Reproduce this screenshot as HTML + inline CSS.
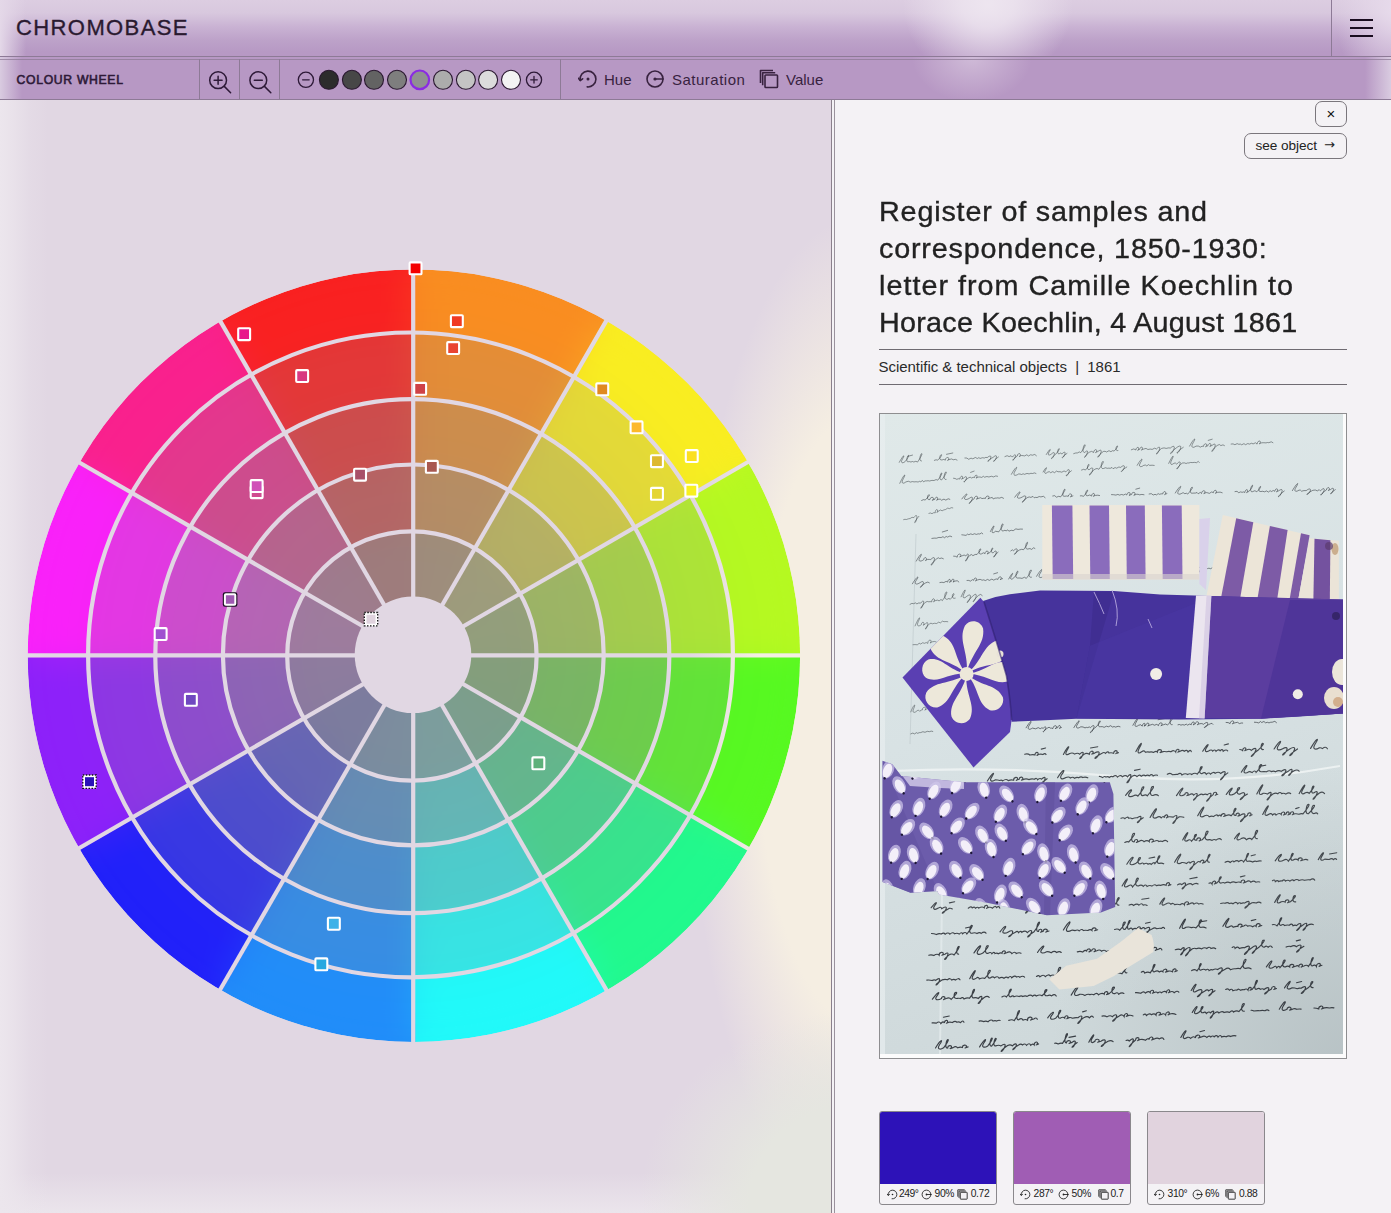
<!DOCTYPE html>
<html lang="en"><head><meta charset="utf-8"><title>Chromobase - Colour Wheel</title>
<style>
*{box-sizing:border-box;margin:0;padding:0}
html,body{width:1391px;height:1213px;overflow:hidden}
body{position:relative;font-family:"Liberation Sans",sans-serif;color:#222;background:#e1d7e3}
.bg{position:absolute;left:0;top:0;width:832px;height:1213px;background:
 radial-gradient(ellipse 220px 190px at 860px 1200px,#e5e6e0 0,#e5e6e0 50%,rgba(229,230,224,0) 100%),
 radial-gradient(ellipse 172px 505px at 860px 720px,#f5eee2 0,#f5eee2 60%,rgba(245,238,226,0) 100%),
 linear-gradient(90deg,#ece6ed 0,rgba(236,230,237,.75) 12px,rgba(236,230,237,.25) 30px,rgba(236,230,237,0) 48px),
 linear-gradient(0deg,#ebe5ec 0,rgba(235,229,236,0) 40px),
 #e1d7e3}
.wheel{position:absolute;left:0;top:100px}
.hdr{position:absolute;left:0;top:0;width:1391px;height:100px;overflow:hidden;color:#2e1a38}
.row1{position:absolute;left:0;top:0;width:1391px;height:57px;background:
 radial-gradient(ellipse 85px 80px at 988px 4px,rgba(238,230,240,.97) 0,rgba(238,230,240,.8) 30%,rgba(238,230,240,0) 100%),
 radial-gradient(ellipse 60px 90px at 1395px 10px,rgba(232,220,236,.95) 0,rgba(232,220,236,0) 100%),
 linear-gradient(90deg,#e4d8e8 0,rgba(228,216,232,0) 26px),
 linear-gradient(180deg,#dccde1 0,#d8c8de 13px,#c9b2d3 27px,#bda2c9 40px,#b799c4 52px,#b798c4 57px)}
.row2{position:absolute;left:0;top:57px;width:1391px;height:43px;background:
 radial-gradient(ellipse 60px 45px at 972px 0px,rgba(228,216,232,.55) 0,rgba(228,216,232,0) 100%),
 linear-gradient(90deg,#d9cbe0 0,rgba(217,203,224,0) 22px),
 linear-gradient(270deg,#d9cbe0 0,rgba(217,203,224,0) 26px),
 #b798c4}
.ln{position:absolute;background:#8d7a96}
.logo{position:absolute;left:16px;top:13px;font-size:22px;letter-spacing:1.4px;line-height:30px;color:#2a1a30;white-space:nowrap;-webkit-text-stroke:.35px #2a1a30}
.cw{position:absolute;left:16.6px;top:70px;font-size:12.2px;font-weight:400;letter-spacing:.68px;line-height:20px;color:#2e1a38;white-space:nowrap;-webkit-text-stroke:.6px #2e1a38}
.hsvg{position:absolute;left:0;top:0}
.hsv{position:absolute;top:69px;height:20px;font-size:15px;line-height:20px;color:#38223f;white-space:nowrap}
.hsv .ic{position:absolute;left:0;top:0}
.hsv span{position:absolute;top:0.5px}
.panel{position:absolute;left:0;top:0;width:0;height:0}
.panel:before{content:"";position:absolute;left:831px;top:100px;width:560px;height:1113px;background:#f4f2f5;border-left:1px solid #8a808c}
.panel:after{content:"";position:absolute;left:834px;top:100px;width:1px;height:1113px;background:#9a929c}
.btn{position:absolute;border:1px solid #7a767c;border-radius:7px;background:#f4f2f5;font-size:13px;color:#222}
.btn .x{position:absolute;left:0;top:2px;width:30px;text-align:center;font-size:15px;line-height:20px;color:#111}
.btn .so{position:absolute;left:10.5px;top:3px;line-height:18px;font-size:13.6px;letter-spacing:-.05px;white-space:nowrap}
.btn .ar{position:absolute;left:79px;top:2px;line-height:18px;font-size:13px;font-family:"DejaVu Sans",sans-serif}
.ttl{position:absolute;left:879px;top:194.4px;width:500px;font-size:27.5px;font-weight:400;line-height:36.7px;color:#222;white-space:nowrap;-webkit-text-stroke:.35px #222;transform:scaleX(1.045);transform-origin:0 0}
.ttl span{display:block}
.hr{position:absolute;left:879px;width:468px;height:1px;background:#6f6b72}
.meta{position:absolute;left:878.5px;top:356.5px;font-size:15px;line-height:20px;color:#2a2a2a;white-space:nowrap;letter-spacing:-.03px}
.frame{position:absolute;left:879px;top:413px;width:468px;height:646px;border:1px solid #8e8e90;background:#fbfbfb;overflow:hidden}
.frame svg{position:absolute;left:0;top:0}
.sw{position:absolute;top:1111px;width:118px;height:94px;border:1px solid #8a888c;border-radius:3px;background:#f4f2f5;overflow:hidden}
.swc{position:absolute;left:0;top:0;width:116px;height:72px}
.swl{position:absolute;left:0;top:72px;width:116px;height:20px;font-size:10.3px;color:#222}
.swl i{position:absolute;top:4.5px;width:11px;height:11px;font-style:normal}
.swl i svg{position:absolute;left:0;top:0}
.swl b{position:absolute;top:4px;font-weight:400;line-height:12px;letter-spacing:-.4px}
</style></head><body>
<div class="bg"></div>
<svg class="wheel" width="832" height="1113" viewBox="0 100 832 1113">
<defs>
<clipPath id="c0"><circle cx="413.9" cy="655.7" r="386.2"/></clipPath>
<clipPath id="c1"><circle cx="410.5" cy="654.9" r="322.4"/></clipPath>
<clipPath id="c2"><circle cx="412.3" cy="656.2" r="257.0"/></clipPath>
<clipPath id="c3"><circle cx="413.3" cy="654.9" r="190.4"/></clipPath>
<clipPath id="c4"><circle cx="411.9" cy="656.0" r="124.7"/></clipPath>
<mask id="wm" maskUnits="userSpaceOnUse" x="0" y="100" width="832" height="1113">
<circle cx="413.9" cy="655.7" r="386.2" fill="#fff"/>
<circle cx="413.0" cy="654.8" r="58.3" fill="#000"/>
<g fill="none" stroke="#000" stroke-width="4.2">
<circle cx="410.5" cy="654.9" r="322.40"/>
<circle cx="412.3" cy="656.2" r="257.00"/>
<circle cx="413.3" cy="654.9" r="190.40"/>
<circle cx="411.9" cy="656.0" r="124.70"/>
<line x1="413.2" y1="655.3" x2="413.2" y2="255.3"/>
<line x1="413.2" y1="655.3" x2="613.2" y2="308.9"/>
<line x1="413.2" y1="655.3" x2="759.6" y2="455.3"/>
<line x1="413.2" y1="655.3" x2="813.2" y2="655.3"/>
<line x1="413.2" y1="655.3" x2="759.6" y2="855.3"/>
<line x1="413.2" y1="655.3" x2="613.2" y2="1001.7"/>
<line x1="413.2" y1="655.3" x2="413.2" y2="1055.3"/>
<line x1="413.2" y1="655.3" x2="213.2" y2="1001.7"/>
<line x1="413.2" y1="655.3" x2="66.8" y2="855.3"/>
<line x1="413.2" y1="655.3" x2="13.2" y2="655.3"/>
<line x1="413.2" y1="655.3" x2="66.8" y2="455.3"/>
<line x1="413.2" y1="655.3" x2="213.2" y2="308.9"/>
</g></mask>
<filter id="bl" filterUnits="userSpaceOnUse" x="0" y="200" width="832" height="920"><feGaussianBlur stdDeviation="16"/></filter></defs>
<g mask="url(#wm)">
<g>
<g clip-path="url(#c0)">
<path fill="#f98d21" d="M413.2 655.3L411.1 261.1A394.2 394.2 0 0 1 612.1 314.9Z"/>
<path fill="#f9ed21" d="M413.2 655.3L608.5 312.9A394.2 394.2 0 0 1 755.6 460.0Z"/>
<path fill="#b5f921" d="M413.2 655.3L753.6 456.4A394.2 394.2 0 0 1 807.4 657.4Z"/>
<path fill="#57f921" d="M413.2 655.3L807.4 653.2A394.2 394.2 0 0 1 753.6 854.2Z"/>
<path fill="#21f98d" d="M413.2 655.3L755.6 850.6A394.2 394.2 0 0 1 608.5 997.7Z"/>
<path fill="#21f9f9" d="M413.2 655.3L612.1 995.7A394.2 394.2 0 0 1 411.1 1049.5Z"/>
<path fill="#218df9" d="M413.2 655.3L415.3 1049.5A394.2 394.2 0 0 1 214.3 995.7Z"/>
<path fill="#2121f9" d="M413.2 655.3L217.9 997.7A394.2 394.2 0 0 1 70.8 850.6Z"/>
<path fill="#8d21f9" d="M413.2 655.3L72.8 854.2A394.2 394.2 0 0 1 19.0 653.2Z"/>
<path fill="#f921f9" d="M413.2 655.3L19.0 657.4A394.2 394.2 0 0 1 72.8 456.4Z"/>
<path fill="#f9218d" d="M413.2 655.3L70.8 460.0A394.2 394.2 0 0 1 217.9 312.9Z"/>
<path fill="#f92121" d="M413.2 655.3L214.3 314.9A394.2 394.2 0 0 1 415.3 261.1Z"/>
</g>
<g clip-path="url(#c1)">
<path fill="#e38d38" d="M413.2 655.3L411.5 324.9A330.4 330.4 0 0 1 579.9 370.0Z"/>
<path fill="#e3d938" d="M413.2 655.3L576.9 368.3A330.4 330.4 0 0 1 700.2 491.6Z"/>
<path fill="#ace338" d="M413.2 655.3L698.5 488.6A330.4 330.4 0 0 1 743.6 657.0Z"/>
<path fill="#62e338" d="M413.2 655.3L743.6 653.6A330.4 330.4 0 0 1 698.5 822.0Z"/>
<path fill="#38e38d" d="M413.2 655.3L700.2 819.0A330.4 330.4 0 0 1 576.9 942.3Z"/>
<path fill="#38e3e3" d="M413.2 655.3L579.9 940.6A330.4 330.4 0 0 1 411.5 985.7Z"/>
<path fill="#388de3" d="M413.2 655.3L414.9 985.7A330.4 330.4 0 0 1 246.5 940.6Z"/>
<path fill="#3838e3" d="M413.2 655.3L249.5 942.3A330.4 330.4 0 0 1 126.2 819.0Z"/>
<path fill="#8d38e3" d="M413.2 655.3L127.9 822.0A330.4 330.4 0 0 1 82.8 653.6Z"/>
<path fill="#e338e3" d="M413.2 655.3L82.8 657.0A330.4 330.4 0 0 1 127.9 488.6Z"/>
<path fill="#e3388d" d="M413.2 655.3L126.2 491.6A330.4 330.4 0 0 1 249.5 368.3Z"/>
<path fill="#e33838" d="M413.2 655.3L246.5 370.0A330.4 330.4 0 0 1 414.9 324.9Z"/>
</g>
<g clip-path="url(#c2)">
<path fill="#cc8d4e" d="M413.2 655.3L411.8 390.3A265.0 265.0 0 0 1 546.9 426.5Z"/>
<path fill="#ccc44e" d="M413.2 655.3L544.5 425.1A265.0 265.0 0 0 1 643.4 524.0Z"/>
<path fill="#a4cc4e" d="M413.2 655.3L642.0 521.6A265.0 265.0 0 0 1 678.2 656.7Z"/>
<path fill="#6ecc4e" d="M413.2 655.3L678.2 653.9A265.0 265.0 0 0 1 642.0 789.0Z"/>
<path fill="#4ecc8d" d="M413.2 655.3L643.4 786.6A265.0 265.0 0 0 1 544.5 885.5Z"/>
<path fill="#4ecccc" d="M413.2 655.3L546.9 884.1A265.0 265.0 0 0 1 411.8 920.3Z"/>
<path fill="#4e8dcc" d="M413.2 655.3L414.6 920.3A265.0 265.0 0 0 1 279.5 884.1Z"/>
<path fill="#4e4ecc" d="M413.2 655.3L281.9 885.5A265.0 265.0 0 0 1 183.0 786.6Z"/>
<path fill="#8d4ecc" d="M413.2 655.3L184.4 789.0A265.0 265.0 0 0 1 148.2 653.9Z"/>
<path fill="#cc4ecc" d="M413.2 655.3L148.2 656.7A265.0 265.0 0 0 1 184.4 521.6Z"/>
<path fill="#cc4e8d" d="M413.2 655.3L183.0 524.0A265.0 265.0 0 0 1 281.9 425.1Z"/>
<path fill="#cc4e4e" d="M413.2 655.3L279.5 426.5A265.0 265.0 0 0 1 414.6 390.3Z"/>
</g>
<g clip-path="url(#c3)">
<path fill="#b58d65" d="M413.2 655.3L412.2 456.9A198.4 198.4 0 0 1 513.3 484.0Z"/>
<path fill="#b5b065" d="M413.2 655.3L511.5 483.0A198.4 198.4 0 0 1 585.5 557.0Z"/>
<path fill="#9cb565" d="M413.2 655.3L584.5 555.2A198.4 198.4 0 0 1 611.6 656.3Z"/>
<path fill="#79b565" d="M413.2 655.3L611.6 654.3A198.4 198.4 0 0 1 584.5 755.4Z"/>
<path fill="#65b58d" d="M413.2 655.3L585.5 753.6A198.4 198.4 0 0 1 511.5 827.6Z"/>
<path fill="#65b5b5" d="M413.2 655.3L513.3 826.6A198.4 198.4 0 0 1 412.2 853.7Z"/>
<path fill="#658db5" d="M413.2 655.3L414.2 853.7A198.4 198.4 0 0 1 313.1 826.6Z"/>
<path fill="#6565b5" d="M413.2 655.3L314.9 827.6A198.4 198.4 0 0 1 240.9 753.6Z"/>
<path fill="#8d65b5" d="M413.2 655.3L241.9 755.4A198.4 198.4 0 0 1 214.8 654.3Z"/>
<path fill="#b565b5" d="M413.2 655.3L214.8 656.3A198.4 198.4 0 0 1 241.9 555.2Z"/>
<path fill="#b5658d" d="M413.2 655.3L240.9 557.0A198.4 198.4 0 0 1 314.9 483.0Z"/>
<path fill="#b56565" d="M413.2 655.3L313.1 484.0A198.4 198.4 0 0 1 414.2 456.9Z"/>
</g>
<g clip-path="url(#c4)">
<path fill="#9e8d7c" d="M413.2 655.3L412.5 522.6A132.7 132.7 0 0 1 480.2 540.7Z"/>
<path fill="#9e9c7c" d="M413.2 655.3L478.9 540.0A132.7 132.7 0 0 1 528.5 589.6Z"/>
<path fill="#939e7c" d="M413.2 655.3L527.8 588.3A132.7 132.7 0 0 1 545.9 656.0Z"/>
<path fill="#849e7c" d="M413.2 655.3L545.9 654.6A132.7 132.7 0 0 1 527.8 722.3Z"/>
<path fill="#7c9e8d" d="M413.2 655.3L528.5 721.0A132.7 132.7 0 0 1 478.9 770.6Z"/>
<path fill="#7c9e9e" d="M413.2 655.3L480.2 769.9A132.7 132.7 0 0 1 412.5 788.0Z"/>
<path fill="#7c8d9e" d="M413.2 655.3L413.9 788.0A132.7 132.7 0 0 1 346.2 769.9Z"/>
<path fill="#7c7c9e" d="M413.2 655.3L347.5 770.6A132.7 132.7 0 0 1 297.9 721.0Z"/>
<path fill="#8d7c9e" d="M413.2 655.3L298.6 722.3A132.7 132.7 0 0 1 280.5 654.6Z"/>
<path fill="#9e7c9e" d="M413.2 655.3L280.5 656.0A132.7 132.7 0 0 1 298.6 588.3Z"/>
<path fill="#9e7c8d" d="M413.2 655.3L297.9 589.6A132.7 132.7 0 0 1 347.5 540.0Z"/>
<path fill="#9e7c7c" d="M413.2 655.3L346.2 540.7A132.7 132.7 0 0 1 413.9 522.6Z"/>
</g>
</g>
<g filter="url(#bl)" opacity=".2">
<g clip-path="url(#c0)">
<path fill="#f98d21" d="M413.2 655.3L411.1 261.1A394.2 394.2 0 0 1 612.1 314.9Z"/>
<path fill="#f9ed21" d="M413.2 655.3L608.5 312.9A394.2 394.2 0 0 1 755.6 460.0Z"/>
<path fill="#b5f921" d="M413.2 655.3L753.6 456.4A394.2 394.2 0 0 1 807.4 657.4Z"/>
<path fill="#57f921" d="M413.2 655.3L807.4 653.2A394.2 394.2 0 0 1 753.6 854.2Z"/>
<path fill="#21f98d" d="M413.2 655.3L755.6 850.6A394.2 394.2 0 0 1 608.5 997.7Z"/>
<path fill="#21f9f9" d="M413.2 655.3L612.1 995.7A394.2 394.2 0 0 1 411.1 1049.5Z"/>
<path fill="#218df9" d="M413.2 655.3L415.3 1049.5A394.2 394.2 0 0 1 214.3 995.7Z"/>
<path fill="#2121f9" d="M413.2 655.3L217.9 997.7A394.2 394.2 0 0 1 70.8 850.6Z"/>
<path fill="#8d21f9" d="M413.2 655.3L72.8 854.2A394.2 394.2 0 0 1 19.0 653.2Z"/>
<path fill="#f921f9" d="M413.2 655.3L19.0 657.4A394.2 394.2 0 0 1 72.8 456.4Z"/>
<path fill="#f9218d" d="M413.2 655.3L70.8 460.0A394.2 394.2 0 0 1 217.9 312.9Z"/>
<path fill="#f92121" d="M413.2 655.3L214.3 314.9A394.2 394.2 0 0 1 415.3 261.1Z"/>
</g>
<g clip-path="url(#c1)">
<path fill="#e38d38" d="M413.2 655.3L411.5 324.9A330.4 330.4 0 0 1 579.9 370.0Z"/>
<path fill="#e3d938" d="M413.2 655.3L576.9 368.3A330.4 330.4 0 0 1 700.2 491.6Z"/>
<path fill="#ace338" d="M413.2 655.3L698.5 488.6A330.4 330.4 0 0 1 743.6 657.0Z"/>
<path fill="#62e338" d="M413.2 655.3L743.6 653.6A330.4 330.4 0 0 1 698.5 822.0Z"/>
<path fill="#38e38d" d="M413.2 655.3L700.2 819.0A330.4 330.4 0 0 1 576.9 942.3Z"/>
<path fill="#38e3e3" d="M413.2 655.3L579.9 940.6A330.4 330.4 0 0 1 411.5 985.7Z"/>
<path fill="#388de3" d="M413.2 655.3L414.9 985.7A330.4 330.4 0 0 1 246.5 940.6Z"/>
<path fill="#3838e3" d="M413.2 655.3L249.5 942.3A330.4 330.4 0 0 1 126.2 819.0Z"/>
<path fill="#8d38e3" d="M413.2 655.3L127.9 822.0A330.4 330.4 0 0 1 82.8 653.6Z"/>
<path fill="#e338e3" d="M413.2 655.3L82.8 657.0A330.4 330.4 0 0 1 127.9 488.6Z"/>
<path fill="#e3388d" d="M413.2 655.3L126.2 491.6A330.4 330.4 0 0 1 249.5 368.3Z"/>
<path fill="#e33838" d="M413.2 655.3L246.5 370.0A330.4 330.4 0 0 1 414.9 324.9Z"/>
</g>
<g clip-path="url(#c2)">
<path fill="#cc8d4e" d="M413.2 655.3L411.8 390.3A265.0 265.0 0 0 1 546.9 426.5Z"/>
<path fill="#ccc44e" d="M413.2 655.3L544.5 425.1A265.0 265.0 0 0 1 643.4 524.0Z"/>
<path fill="#a4cc4e" d="M413.2 655.3L642.0 521.6A265.0 265.0 0 0 1 678.2 656.7Z"/>
<path fill="#6ecc4e" d="M413.2 655.3L678.2 653.9A265.0 265.0 0 0 1 642.0 789.0Z"/>
<path fill="#4ecc8d" d="M413.2 655.3L643.4 786.6A265.0 265.0 0 0 1 544.5 885.5Z"/>
<path fill="#4ecccc" d="M413.2 655.3L546.9 884.1A265.0 265.0 0 0 1 411.8 920.3Z"/>
<path fill="#4e8dcc" d="M413.2 655.3L414.6 920.3A265.0 265.0 0 0 1 279.5 884.1Z"/>
<path fill="#4e4ecc" d="M413.2 655.3L281.9 885.5A265.0 265.0 0 0 1 183.0 786.6Z"/>
<path fill="#8d4ecc" d="M413.2 655.3L184.4 789.0A265.0 265.0 0 0 1 148.2 653.9Z"/>
<path fill="#cc4ecc" d="M413.2 655.3L148.2 656.7A265.0 265.0 0 0 1 184.4 521.6Z"/>
<path fill="#cc4e8d" d="M413.2 655.3L183.0 524.0A265.0 265.0 0 0 1 281.9 425.1Z"/>
<path fill="#cc4e4e" d="M413.2 655.3L279.5 426.5A265.0 265.0 0 0 1 414.6 390.3Z"/>
</g>
<g clip-path="url(#c3)">
<path fill="#b58d65" d="M413.2 655.3L412.2 456.9A198.4 198.4 0 0 1 513.3 484.0Z"/>
<path fill="#b5b065" d="M413.2 655.3L511.5 483.0A198.4 198.4 0 0 1 585.5 557.0Z"/>
<path fill="#9cb565" d="M413.2 655.3L584.5 555.2A198.4 198.4 0 0 1 611.6 656.3Z"/>
<path fill="#79b565" d="M413.2 655.3L611.6 654.3A198.4 198.4 0 0 1 584.5 755.4Z"/>
<path fill="#65b58d" d="M413.2 655.3L585.5 753.6A198.4 198.4 0 0 1 511.5 827.6Z"/>
<path fill="#65b5b5" d="M413.2 655.3L513.3 826.6A198.4 198.4 0 0 1 412.2 853.7Z"/>
<path fill="#658db5" d="M413.2 655.3L414.2 853.7A198.4 198.4 0 0 1 313.1 826.6Z"/>
<path fill="#6565b5" d="M413.2 655.3L314.9 827.6A198.4 198.4 0 0 1 240.9 753.6Z"/>
<path fill="#8d65b5" d="M413.2 655.3L241.9 755.4A198.4 198.4 0 0 1 214.8 654.3Z"/>
<path fill="#b565b5" d="M413.2 655.3L214.8 656.3A198.4 198.4 0 0 1 241.9 555.2Z"/>
<path fill="#b5658d" d="M413.2 655.3L240.9 557.0A198.4 198.4 0 0 1 314.9 483.0Z"/>
<path fill="#b56565" d="M413.2 655.3L313.1 484.0A198.4 198.4 0 0 1 414.2 456.9Z"/>
</g>
<g clip-path="url(#c4)">
<path fill="#9e8d7c" d="M413.2 655.3L412.5 522.6A132.7 132.7 0 0 1 480.2 540.7Z"/>
<path fill="#9e9c7c" d="M413.2 655.3L478.9 540.0A132.7 132.7 0 0 1 528.5 589.6Z"/>
<path fill="#939e7c" d="M413.2 655.3L527.8 588.3A132.7 132.7 0 0 1 545.9 656.0Z"/>
<path fill="#849e7c" d="M413.2 655.3L545.9 654.6A132.7 132.7 0 0 1 527.8 722.3Z"/>
<path fill="#7c9e8d" d="M413.2 655.3L528.5 721.0A132.7 132.7 0 0 1 478.9 770.6Z"/>
<path fill="#7c9e9e" d="M413.2 655.3L480.2 769.9A132.7 132.7 0 0 1 412.5 788.0Z"/>
<path fill="#7c8d9e" d="M413.2 655.3L413.9 788.0A132.7 132.7 0 0 1 346.2 769.9Z"/>
<path fill="#7c7c9e" d="M413.2 655.3L347.5 770.6A132.7 132.7 0 0 1 297.9 721.0Z"/>
<path fill="#8d7c9e" d="M413.2 655.3L298.6 722.3A132.7 132.7 0 0 1 280.5 654.6Z"/>
<path fill="#9e7c9e" d="M413.2 655.3L280.5 656.0A132.7 132.7 0 0 1 298.6 588.3Z"/>
<path fill="#9e7c8d" d="M413.2 655.3L297.9 589.6A132.7 132.7 0 0 1 347.5 540.0Z"/>
<path fill="#9e7c7c" d="M413.2 655.3L346.2 540.7A132.7 132.7 0 0 1 413.9 522.6Z"/>
</g>
</g>
</g>
<rect x="409.6" y="262.4" width="11.9" height="11.9" rx="0.9" fill="#f40000" stroke="#fff" stroke-width="2.1"/>
<rect x="450.9" y="315.2" width="11.9" height="11.9" rx="0.9" fill="#f03a22" stroke="#fff" stroke-width="2.1"/>
<rect x="447.2" y="342.1" width="11.9" height="11.9" rx="0.9" fill="#e94432" stroke="#fff" stroke-width="2.1"/>
<rect x="414.2" y="382.9" width="11.9" height="11.9" rx="0.9" fill="#cf4147" stroke="#fff" stroke-width="2.1"/>
<rect x="596.3" y="383.4" width="11.9" height="11.9" rx="0.9" fill="#e08a20" stroke="#fff" stroke-width="2.1"/>
<rect x="630.6" y="421.4" width="11.9" height="11.9" rx="0.9" fill="#fdb92a" stroke="#fff" stroke-width="2.1"/>
<rect x="651.0" y="455.2" width="11.9" height="11.9" rx="0.9" fill="#ddb930" stroke="#fff" stroke-width="2.1"/>
<rect x="685.8" y="450.1" width="11.9" height="11.9" rx="0.9" fill="#fbdf20" stroke="#fff" stroke-width="2.1"/>
<rect x="651.0" y="487.9" width="11.9" height="11.9" rx="0.9" fill="#e4d535" stroke="#fff" stroke-width="2.1"/>
<rect x="685.4" y="484.7" width="11.9" height="11.9" rx="0.9" fill="#f8f020" stroke="#fff" stroke-width="2.1"/>
<rect x="238.2" y="328.2" width="11.9" height="11.9" rx="0.9" fill="#e8188a" stroke="#fff" stroke-width="2.1"/>
<rect x="296.2" y="370.1" width="11.9" height="11.9" rx="0.9" fill="#d83880" stroke="#fff" stroke-width="2.1"/>
<rect x="354.1" y="468.7" width="11.9" height="11.9" rx="0.9" fill="#a85068" stroke="#fff" stroke-width="2.1"/>
<rect x="425.9" y="460.9" width="11.9" height="11.9" rx="0.9" fill="#a85850" stroke="#fff" stroke-width="2.1"/>
<rect x="250.7" y="486.2" width="11.9" height="11.9" rx="0.9" fill="#d04c90" stroke="#fff" stroke-width="2.1"/>
<rect x="250.7" y="480.1" width="11.9" height="11.9" rx="0.9" fill="#d050b8" stroke="#fff" stroke-width="2.1"/>
<rect x="154.7" y="628.1" width="11.9" height="11.9" rx="0.9" fill="#a050d0" stroke="#fff" stroke-width="2.1"/>
<rect x="184.9" y="693.9" width="11.9" height="11.9" rx="0.9" fill="#7048c0" stroke="#fff" stroke-width="2.1"/>
<rect x="532.4" y="757.4" width="11.9" height="11.9" rx="0.9" fill="#5db07a" stroke="#fff" stroke-width="2.1"/>
<rect x="327.9" y="917.8" width="11.9" height="11.9" rx="0.9" fill="#3db2e8" stroke="#fff" stroke-width="2.1"/>
<rect x="315.4" y="958.4" width="11.9" height="11.9" rx="0.9" fill="#28a8e0" stroke="#fff" stroke-width="2.1"/>
<rect x="222.8" y="592.2" width="14.6" height="14.6" rx="2.2" fill="#1a1020"/>
<rect x="224.9" y="594.3" width="10.4" height="10.4" rx="1" fill="#9f59b2" stroke="#fff" stroke-width="2"/>
<rect x="364.2" y="612.4" width="13.6" height="13.6" fill="#fff"/>
<rect x="364.3" y="612.5" width="13.4" height="13.4" fill="none" stroke="#111" stroke-width="1.3" stroke-dasharray="1.5 1.5"/>
<rect x="366.5" y="614.7" width="9" height="9" fill="#e0d3de"/>
<rect x="82.7" y="774.9" width="13.6" height="13.6" fill="#fff"/>
<rect x="82.8" y="775.0" width="13.4" height="13.4" fill="none" stroke="#111" stroke-width="1.3" stroke-dasharray="1.5 1.5"/>
<rect x="85.0" y="777.2" width="9" height="9" fill="#2b12b8"/>
</svg>

<div class="panel">
  <div class="btn" style="left:1315px;top:101px;width:32px;height:26px"><span class="x">&#215;</span></div>
  <div class="btn" style="left:1244px;top:133px;width:103px;height:26px"><span class="so">see object</span><span class="ar">&#8594;</span></div>
  <h1 class="ttl"><span style="letter-spacing:.79px">Register of samples and</span><span style="letter-spacing:.78px">correspondence, 1850-1930:</span><span style="letter-spacing:.975px">letter from Camille Koechlin to</span><span style="letter-spacing:.25px">Horace Koechlin, 4 August 1861</span></h1>
  <div class="hr" style="top:349px"></div>
  <div class="meta">Scientific &amp; technical objects&nbsp; |&nbsp; 1861</div>
  <div class="hr" style="top:384px"></div>
  <div class="frame"><svg width="466" height="644" viewBox="0 0 466 644">
<defs><linearGradient id="pg" x1="0" y1="0" x2="0.25" y2="1"><stop offset="0" stop-color="#e0e9e9"/><stop offset="0.5" stop-color="#d8e2e4"/><stop offset="1" stop-color="#cfd9db"/></linearGradient><radialGradient id="pd" gradientUnits="userSpaceOnUse" cx="470" cy="650" r="300"><stop offset="0" stop-color="#a9b4b7" stop-opacity=".62"/><stop offset="1" stop-color="#a9b4b7" stop-opacity="0"/></radialGradient><linearGradient id="mf" x1="0" y1="0" x2="1" y2="0"><stop offset="0" stop-color="#3f2c92"/><stop offset="1" stop-color="#432c8e"/></linearGradient><clipPath id="pc"><rect x="0" y="0" width="463" height="640"/></clipPath><clipPath id="flapc"><path d="M22.5 263.4L100.4 183.7L104 188Q118 232 126.5 262Q131 290 131.6 306L130 318L93.5 353.4Z"/></clipPath><clipPath id="patc"><polygon points="2.5,346.7 12.4,350.3 21.4,361.9 84.3,368.2 229.8,368.2 233.4,379.9 235.2,493.1 220.9,498.5 166.9,501.2 105.8,488.6 59.1,480.6 57.3,477 30.4,478.8 2.5,468"/></clipPath></defs>
<rect width="466" height="644" fill="#fcfcfc"/>
<g clip-path="url(#pc)">
<rect width="463" height="640" fill="url(#pg)"/>
<rect width="463" height="640" fill="url(#pd)"/>
<rect x="0" y="0" width="5" height="640" fill="#e8eef0" opacity=".7"/>
<path d="M10 357Q120 352 235 362T460 352" fill="none" stroke="#eef3f3" stroke-width="2.2" opacity=".9"/>
<path d="M62 480L60 640" fill="none" stroke="#e3ebec" stroke-width="2" opacity=".8"/>
<path d="M36 120L30 330" fill="none" stroke="#b9c3c8" stroke-width=".8" opacity=".7"/>
<path d="M19.3 48.3C23.5 40.3 25.4 40.2 22.5 44.9C20.0 49.3 22.7 49.6 25.2 47.5C27.8 44.2 29.3 41.4 28.4 41.4C27.4 41.5 25.5 48.5 28.3 47.7Q29.7 47.4 30.9 48.0Q32.6 47.0 33.8 48.0Q36.1 46.5 37.5 48.1C41.0 42.9 42.7 39.6 41.7 39.6C40.4 39.7 38.3 47.8 41.5 47.0M28.0 42.3L32.5 41.1M54.3 46.3Q56.3 45.2 57.7 46.2C60.9 43.0 62.5 40.6 61.3 40.7C59.9 40.7 58.4 46.7 62.1 45.9Q64.1 44.7 65.3 46.2C65.3 43.0 69.4 42.5 68.7 45.2C68.2 46.8 65.7 46.7 70.2 45.3Q72.0 44.3 73.1 45.8Q75.5 44.6 77.1 46.0M66.5 40.3L72.8 39.0M84.9 43.9Q87.1 43.5 88.7 45.3Q91.3 43.2 92.8 44.8Q95.7 42.3 97.3 44.5Q99.2 42.6 100.0 44.5Q102.5 43.2 104.4 44.0Q106.1 42.7 107.1 43.7C109.6 41.5 111.5 41.4 110.8 43.9C109.5 48.4 103.4 48.7 113.2 43.3C115.5 41.2 117.1 41.1 116.3 43.7C114.9 48.7 109.7 49.0 118.4 43.0M124.9 42.5Q127.5 40.8 129.1 42.6Q131.4 40.6 132.3 43.1C134.6 40.2 136.1 40.1 135.4 42.6C134.0 47.5 129.2 47.7 137.3 42.0C137.3 39.1 141.0 38.7 140.3 41.4C139.8 43.0 137.6 42.9 141.6 41.5Q143.2 41.6 144.6 41.9Q147.2 39.6 148.4 42.0Q150.9 39.9 152.4 41.2Q155.1 39.3 156.5 41.7M166.3 40.5C169.9 34.3 171.6 34.2 169.1 37.9C166.9 41.5 169.4 41.9 171.8 39.7C173.6 38.1 174.9 38.1 174.2 40.6C172.6 46.0 168.3 46.2 175.9 40.0C178.6 36.9 179.9 34.6 179.1 34.6C177.9 34.7 176.5 40.5 179.3 39.7Q181.1 37.9 181.8 40.1C184.1 37.6 185.7 37.5 185.0 40.0C183.5 45.1 178.4 45.4 187.0 39.4M193.7 39.6Q195.8 38.7 197.5 38.9Q199.6 37.1 200.7 38.7C204.2 34.1 206.0 30.7 204.9 30.7C203.5 30.8 201.4 39.2 204.9 38.4C206.8 36.4 208.1 36.3 207.3 38.8C205.6 44.9 201.3 45.1 209.1 38.3Q212.0 36.3 213.6 38.5C213.8 35.1 217.4 34.7 216.6 37.4C216.1 39.0 214.0 38.9 217.9 37.5C220.1 35.7 221.9 35.6 221.1 38.1C219.1 44.9 213.6 45.2 223.3 37.5Q225.2 36.8 226.5 38.0Q229.3 35.5 230.9 37.7Q232.9 35.9 234.1 37.1C236.9 34.1 238.3 31.9 237.3 31.9C236.1 32.0 234.7 37.4 237.9 36.6M251.3 35.7Q254.2 33.9 255.9 36.0C256.0 32.9 259.4 32.5 258.6 35.1C258.2 36.8 256.2 36.7 259.8 35.3C259.9 32.7 263.2 32.3 262.4 34.9C261.9 36.6 260.0 36.5 263.6 35.1Q266.3 33.5 267.9 35.5Q270.3 34.7 272.2 35.4Q274.9 33.2 276.5 35.0C278.8 32.6 280.3 32.5 279.6 35.0C277.6 41.8 272.6 42.1 281.6 34.4Q284.2 33.4 286.2 34.4Q288.5 33.6 290.4 34.0C293.0 31.8 294.9 31.7 294.2 34.3C292.1 41.4 285.9 41.8 296.7 33.6C299.3 31.5 301.4 31.4 300.7 33.9C298.7 40.8 292.0 41.2 303.3 33.3M309.6 32.1C314.3 23.3 316.5 23.2 313.1 28.8C310.1 33.9 313.3 34.2 316.0 32.1Q318.5 31.5 320.3 33.1Q322.2 31.7 323.5 32.4C323.5 29.3 327.4 28.9 326.6 31.5C326.1 33.2 323.9 33.1 328.0 31.7C328.0 29.1 331.6 28.7 330.8 31.3C330.3 32.9 328.2 32.9 332.1 31.4C334.2 29.6 335.8 29.5 335.1 32.1C333.0 39.3 327.9 39.5 337.1 31.5Q339.6 29.5 340.9 31.6Q343.1 30.0 344.5 31.5M328.2 26.4L332.2 25.2M351.1 30.0Q353.3 29.4 354.9 30.7Q357.4 28.8 358.8 30.3Q360.5 29.6 361.7 30.8Q364.3 28.5 365.5 30.7Q368.0 28.8 369.5 30.1Q371.7 28.5 373.1 29.9Q375.8 27.6 377.1 30.1C377.3 26.5 381.1 26.0 380.3 28.7C379.9 30.3 377.6 30.2 381.7 28.8Q383.9 28.6 386.0 28.9Q387.6 28.2 388.8 28.7Q391.5 26.8 393.0 28.6" fill="none" stroke="#2b3036" stroke-width="0.90" stroke-linecap="round" opacity="0.55"/>
<path d="M19.8 69.3C24.4 59.2 26.4 59.1 23.3 64.7C20.6 69.8 23.4 70.1 25.9 67.9Q28.6 66.5 30.4 68.1Q32.5 67.2 34.1 67.9Q36.2 67.5 38.1 68.0Q39.8 66.7 40.8 67.8Q42.8 65.2 43.5 67.8Q45.3 66.4 46.5 66.9Q48.2 66.5 49.6 67.0Q52.0 66.0 54.0 66.5Q56.3 64.8 57.8 66.2C61.0 62.0 62.7 58.9 61.6 59.0C60.3 59.1 58.5 66.6 61.8 65.8C65.3 61.2 67.1 57.8 66.0 57.9C64.5 58.0 62.5 66.4 66.1 65.5M73.5 64.2Q75.2 64.2 76.7 65.3Q78.5 64.4 79.9 65.0C80.1 61.7 83.3 61.3 82.5 63.9C82.1 65.6 80.2 65.5 83.7 64.1C85.6 62.2 87.1 62.1 86.4 64.7C85.2 69.1 80.5 69.5 88.3 64.0Q90.4 62.3 91.5 64.0Q93.3 62.9 94.6 63.5C94.7 60.7 97.7 60.3 97.0 62.9C96.6 64.6 94.8 64.5 98.1 63.1Q100.1 62.7 101.7 63.4Q103.7 61.3 104.6 63.2Q107.1 61.9 108.9 63.0Q111.6 61.6 113.5 62.9Q115.9 61.2 117.6 62.2M90.6 58.4L94.1 57.1M131.4 60.3C136.1 51.8 138.5 51.6 135.0 57.0C132.1 62.0 135.5 62.2 138.5 60.0Q140.1 59.8 141.5 60.5Q143.3 59.2 144.5 60.3Q147.2 58.8 149.1 59.9Q151.0 58.9 152.5 59.5Q154.5 58.3 156.0 59.4M163.1 58.0C166.1 52.6 167.7 52.5 165.4 56.3C163.4 59.8 165.6 60.1 167.8 58.0Q169.5 57.1 170.6 58.7Q173.1 56.6 174.5 58.7Q176.9 55.9 178.0 57.8Q180.1 57.4 181.8 58.2Q184.4 55.8 185.7 57.9C188.2 55.1 189.9 54.9 189.2 57.5C187.6 63.5 182.1 63.9 191.4 56.8M201.5 56.0Q203.9 54.5 205.5 56.0C208.4 52.7 209.8 50.4 208.8 50.4C207.5 50.5 206.2 56.3 209.4 55.5C211.7 53.4 213.4 53.3 212.7 55.9C210.8 62.8 205.2 63.2 214.9 55.2Q217.3 53.6 218.8 55.3C222.5 50.5 224.2 47.3 223.0 47.4C221.5 47.5 219.6 55.4 223.5 54.5Q225.7 53.1 227.2 54.3Q228.8 54.0 230.3 54.3Q232.3 52.5 233.1 54.7Q235.4 52.7 236.6 54.2Q239.1 52.2 240.7 53.4C243.1 51.2 245.0 51.1 244.3 53.6C242.9 58.8 236.9 59.2 246.8 53.0M257.2 51.3C261.5 43.7 263.7 43.5 260.5 48.6C257.8 53.2 261.0 53.5 263.8 51.3Q265.6 50.5 266.8 51.9Q268.8 49.6 269.7 51.4Q272.1 51.0 274.2 51.4M288.7 49.4C292.9 40.4 294.7 40.3 291.7 45.9C289.2 51.0 291.7 51.3 294.0 49.2Q295.6 48.4 296.6 50.2C299.0 47.3 300.8 47.2 300.1 49.7C298.2 56.7 292.7 57.1 302.2 49.1Q304.5 48.4 306.1 49.5Q307.7 48.6 308.9 49.0Q310.7 48.1 312.2 48.6Q314.5 48.1 316.5 48.7Q318.6 46.1 319.4 48.4" fill="none" stroke="#2b3036" stroke-width="0.90" stroke-linecap="round" opacity="0.55"/>
<path d="M41.6 86.4Q43.8 85.0 45.1 86.0C48.6 82.9 50.3 80.7 49.0 80.7C47.5 80.7 46.0 86.3 49.9 85.6C49.9 82.8 54.2 82.5 53.4 85.2C52.8 86.8 50.3 86.6 54.9 85.3C55.0 82.7 58.4 82.4 57.6 85.1C57.1 86.7 55.1 86.5 58.8 85.2Q60.5 84.6 61.5 86.2Q64.3 84.1 65.8 86.1Q68.4 83.8 69.9 85.2M81.9 84.9C86.3 78.9 88.7 78.8 85.5 82.4C82.8 85.9 86.3 86.3 89.4 84.3C91.5 82.7 93.0 82.7 92.2 85.2C90.4 90.9 85.3 91.1 94.3 84.6C94.3 81.7 98.4 81.4 97.5 84.1C97.0 85.7 94.6 85.5 99.0 84.2Q100.9 83.1 102.0 84.6Q104.0 84.0 105.5 84.4C105.5 81.5 109.8 81.2 109.0 83.8C108.4 85.4 105.9 85.3 110.5 83.9Q112.6 82.4 113.3 85.0Q115.1 83.6 116.4 84.1Q118.0 83.5 119.2 84.2Q122.0 82.4 123.6 84.2M134.8 83.2C139.4 76.7 141.8 76.6 138.5 80.8C135.6 84.6 139.1 85.0 142.3 83.0C144.6 81.4 146.4 81.4 145.6 83.9C143.7 89.7 137.9 89.9 147.9 83.3Q149.6 82.6 150.9 83.4Q153.4 81.3 154.3 83.8Q155.9 82.9 157.0 83.6Q159.4 81.8 160.9 82.9Q163.7 81.2 165.2 83.6M172.7 81.9Q175.1 80.7 176.4 83.2Q179.0 81.6 180.6 82.9C184.0 78.3 185.8 75.2 184.8 75.2C183.6 75.2 181.3 83.0 184.4 82.3Q186.6 81.7 188.3 82.3C188.4 79.4 192.3 79.1 191.5 81.7C191.0 83.4 188.6 83.2 192.9 81.9M200.3 81.8Q202.1 81.4 203.5 82.4C206.8 78.6 208.4 76.1 207.4 76.2C206.0 76.2 204.3 82.4 207.7 81.7Q210.2 80.0 211.5 82.1C211.8 78.8 215.2 78.6 214.4 81.2C213.8 82.8 211.8 82.6 215.6 81.4Q217.8 80.9 219.6 81.5M231.5 80.6Q233.8 80.6 235.9 81.1Q238.1 79.7 239.4 81.1Q241.8 79.9 243.5 81.0Q245.7 79.2 246.8 81.0C246.8 78.0 250.9 77.7 250.1 80.3C249.6 81.9 247.2 81.8 251.6 80.5C251.4 77.9 255.8 77.6 255.0 80.2C254.4 81.8 251.9 81.7 256.6 80.3Q258.1 80.0 259.4 80.8Q261.9 80.1 264.0 80.7M255.8 75.2L259.7 74.1M269.1 79.9Q271.7 78.8 273.2 81.0Q275.2 79.7 276.5 80.9Q278.5 78.7 279.3 80.3Q281.2 79.6 282.8 79.9C282.9 77.1 286.4 76.8 285.6 79.4C285.1 81.0 283.0 80.9 286.9 79.6M295.3 79.0C300.3 70.7 302.7 70.7 299.0 75.9C295.9 80.7 299.3 81.1 302.3 79.0Q303.8 78.4 304.8 79.7Q306.7 78.6 307.7 80.1C311.5 75.9 313.3 73.2 312.1 73.2C310.5 73.3 308.7 79.9 312.6 79.2Q314.0 79.0 315.3 79.1Q317.4 77.6 318.2 79.8Q320.7 77.1 321.5 79.5C321.7 76.1 325.7 75.8 324.9 78.5C324.4 80.1 322.0 79.9 326.3 78.6Q327.9 78.7 329.3 79.4Q332.0 76.9 333.4 78.7C333.5 75.8 337.2 75.5 336.4 78.2C335.9 79.8 333.7 79.6 337.7 78.3Q340.2 77.7 342.2 78.7M355.0 77.5Q357.4 76.5 358.7 78.7Q360.8 77.3 362.1 78.3Q363.8 77.5 364.8 78.5C365.2 75.1 368.4 74.8 367.5 77.4C367.0 79.0 365.2 78.9 368.7 77.6C371.8 74.1 373.4 71.3 372.4 71.3C371.2 71.3 369.2 78.4 372.4 77.7Q375.2 75.7 376.8 77.8C379.9 74.8 381.4 72.5 380.4 72.5C379.0 72.6 377.5 78.2 380.9 77.5Q382.9 76.9 384.4 77.8Q387.0 75.9 388.3 78.1Q390.5 75.6 391.3 77.5Q393.6 75.7 394.8 77.3C395.0 74.3 398.4 74.0 397.5 76.7C397.0 78.3 395.0 78.1 398.7 76.8C401.1 75.1 402.8 75.0 402.0 77.5C399.7 84.6 394.1 84.7 404.3 77.0M412.4 76.6C417.4 67.9 419.5 67.8 416.1 73.0C413.1 77.8 416.2 78.2 419.0 76.1Q420.6 75.6 421.5 77.2Q424.1 76.3 426.2 76.6C429.0 74.4 431.1 74.3 430.3 76.9C428.7 81.7 422.1 81.9 432.9 76.3Q435.5 75.4 437.3 76.9Q439.6 74.5 440.4 76.9C443.1 74.0 444.9 74.0 444.1 76.5C442.1 82.6 436.4 82.8 446.4 76.0C446.6 73.0 450.1 72.8 449.3 75.4C448.8 77.0 446.7 76.8 450.6 75.5C452.6 73.8 454.1 73.8 453.3 76.3C451.8 81.2 446.9 81.3 455.3 75.7" fill="none" stroke="#2b3036" stroke-width="0.90" stroke-linecap="round" opacity="0.60"/>
<path d="M23.6 105.6Q25.1 105.0 26.4 105.5Q28.3 104.7 30.1 104.5Q32.1 102.6 33.8 103.6C35.6 101.1 37.1 100.7 36.9 103.3C36.3 110.1 31.2 111.3 38.9 102.3M48.9 99.3Q50.5 98.4 52.0 99.7Q53.8 98.1 55.3 98.8C55.0 95.3 57.9 94.3 57.7 97.1C57.5 98.8 55.7 99.0 58.8 97.0Q60.6 95.1 62.1 96.8Q63.9 95.6 65.6 95.5Q67.7 93.2 69.5 94.6Q71.2 93.1 72.8 93.8" fill="none" stroke="#2b3036" stroke-width="0.90" stroke-linecap="round" opacity="0.50"/>
<path d="M51.9 124.4Q54.3 123.9 56.5 124.2Q59.0 122.9 61.1 123.6Q63.3 121.6 64.4 123.8Q66.4 121.5 67.5 123.1Q70.1 121.0 71.8 122.6M62.3 118.0L67.6 116.4M81.8 120.8Q83.9 121.0 86.0 121.4Q87.9 119.1 88.8 120.7Q91.0 119.1 92.5 120.5Q94.7 119.1 96.3 120.4Q98.2 119.5 99.8 120.0Q101.9 117.7 102.9 119.8M110.4 117.5C113.6 110.6 115.3 110.4 112.9 115.0C110.8 119.3 113.2 119.6 115.3 117.3Q117.1 117.4 118.7 117.9C122.3 113.0 123.9 109.8 122.7 109.9C121.2 110.1 119.7 117.9 123.5 116.8Q125.1 115.7 126.1 116.9Q128.0 114.7 128.9 117.2Q131.3 115.6 133.2 116.7Q136.1 113.7 138.0 115.4Q140.3 114.9 142.5 115.1" fill="none" stroke="#2b3036" stroke-width="0.90" stroke-linecap="round" opacity="0.60"/>
<path d="M36.3 147.1C40.7 138.8 43.1 138.5 40.0 143.4C37.3 147.8 40.9 147.9 43.8 145.6C43.6 143.2 47.0 142.7 46.4 145.4C46.0 147.0 44.0 147.0 47.6 145.4Q49.2 145.4 50.8 145.5C53.1 143.1 55.0 142.9 54.4 145.5C52.6 152.9 46.7 153.5 56.7 144.8Q58.5 142.9 59.6 144.5Q61.8 143.4 63.4 144.7M73.6 142.1Q75.5 141.9 77.2 143.2C77.0 139.7 81.4 139.0 80.8 141.7C80.4 143.4 77.7 143.4 82.4 141.7Q84.4 140.2 85.6 142.0C87.5 139.5 88.8 139.3 88.2 141.9C86.6 148.7 82.3 149.1 90.0 141.2Q91.9 139.7 92.9 141.7Q95.3 139.9 97.1 140.4C100.1 137.2 101.5 134.8 100.4 134.9C98.9 135.0 97.8 140.9 101.4 139.9Q103.7 137.9 105.1 139.6C104.9 136.7 108.8 136.1 108.2 138.8C107.8 140.4 105.4 140.5 109.6 138.8C112.2 136.2 113.5 133.9 112.5 134.1C111.2 134.2 110.2 139.6 113.4 138.6C115.3 136.5 116.8 136.4 116.2 139.0C114.9 144.4 110.1 144.9 118.1 138.2M130.8 136.8Q132.7 134.8 133.6 136.7C135.9 134.3 137.7 134.1 137.1 136.7C136.0 141.4 130.3 142.0 139.4 136.0Q141.8 134.8 143.6 135.7C146.8 131.3 148.4 128.2 147.3 128.3C145.9 128.5 144.4 136.0 147.9 135.0Q150.1 133.9 151.6 135.4Q153.8 132.6 155.0 134.3" fill="none" stroke="#2b3036" stroke-width="0.90" stroke-linecap="round" opacity="0.60"/>
<path d="M32.4 169.8C37.3 161.5 39.7 161.4 36.3 166.2C33.4 170.6 36.9 170.9 40.0 168.7C42.2 167.1 44.0 167.0 43.3 169.6C41.8 174.5 36.1 174.8 45.6 168.9Q48.1 167.1 49.5 168.8M59.9 168.5Q62.1 167.9 63.9 168.6Q66.4 166.3 67.6 168.1C67.9 164.9 71.1 164.5 70.3 167.2C69.8 168.8 68.0 168.7 71.5 167.3C71.5 164.7 74.6 164.3 73.9 167.0C73.4 168.6 71.6 168.5 75.0 167.1Q77.4 165.8 78.9 167.9M87.0 166.4Q89.0 166.1 90.5 167.1Q92.7 164.7 93.8 166.3C93.8 163.5 97.2 163.2 96.4 165.8C96.0 167.4 94.0 167.3 97.7 165.9Q100.3 164.6 102.1 166.2Q104.0 165.3 105.3 166.6Q107.9 164.3 109.3 166.4Q112.2 164.0 113.7 166.1Q116.4 164.1 118.0 165.4C118.1 162.3 122.0 161.9 121.2 164.5C120.7 166.1 118.4 166.1 122.6 164.6M113.7 159.9L117.6 158.7M128.7 165.0C132.3 158.1 133.9 158.0 131.5 161.9C129.3 165.6 131.6 166.0 133.8 163.9C137.1 160.2 138.9 157.2 137.7 157.2C136.3 157.3 134.3 164.8 138.0 164.0Q140.1 163.8 142.0 164.4Q144.8 162.1 146.3 164.4C150.3 159.2 152.3 155.9 151.0 156.0C149.3 156.1 147.3 164.2 151.4 163.3M156.6 162.3C161.4 154.0 163.7 153.9 160.2 159.2C157.2 164.1 160.6 164.5 163.5 162.3Q166.0 161.4 167.7 162.8C171.0 159.6 172.6 157.3 171.4 157.3C169.9 157.4 168.5 163.1 172.3 162.3C172.4 159.5 175.9 159.1 175.1 161.7C174.6 163.3 172.6 163.2 176.4 161.8Q177.8 161.5 178.9 162.2M189.3 161.9Q192.0 160.0 193.9 161.2Q196.1 159.5 197.3 161.3Q199.4 160.4 200.9 161.5C204.2 156.5 205.8 153.3 204.9 153.3C203.8 153.4 201.7 161.3 204.6 160.6C207.9 157.5 209.6 155.0 208.3 155.1C206.8 155.2 205.4 161.1 209.2 160.3Q210.8 159.3 211.7 160.7Q213.6 159.1 214.8 160.4Q217.0 158.1 217.9 160.1M207.6 155.0L212.9 153.7M224.4 158.8Q226.7 157.9 228.1 159.9Q230.3 158.5 231.5 160.0C234.7 154.8 236.3 151.5 235.5 151.5C234.4 151.6 232.2 159.7 235.0 159.0C235.0 156.2 238.4 155.8 237.7 158.5C237.2 160.1 235.2 160.0 238.9 158.6Q240.9 157.9 242.3 159.4C242.5 155.8 246.2 155.4 245.4 158.1C244.9 159.7 242.8 159.6 246.7 158.2Q249.2 156.8 250.7 158.8Q252.6 157.8 254.0 158.8Q256.4 157.5 258.3 158.2Q260.4 157.4 262.1 158.0M270.8 156.7Q272.9 156.7 275.0 157.1C275.1 154.1 278.6 153.7 277.8 156.4C277.3 158.0 275.3 157.9 279.1 156.5Q280.7 156.0 281.9 156.7Q284.1 156.2 285.9 157.2C288.8 154.3 290.8 154.2 290.1 156.7C288.5 162.2 281.8 162.6 292.8 156.1M306.5 154.7Q307.8 154.8 309.0 155.5C312.6 151.7 314.3 149.0 313.1 149.0C311.5 149.1 309.9 155.7 313.8 154.9Q316.0 153.6 317.3 155.1C319.6 152.7 321.3 152.6 320.5 155.2C318.7 161.4 313.5 161.6 322.6 154.6Q325.2 153.5 327.0 154.7Q329.1 153.7 330.5 154.7Q333.2 152.5 334.7 154.6Q337.2 152.8 338.8 153.9M344.7 153.6Q346.9 152.7 348.6 153.5Q350.9 152.2 352.5 153.5Q354.5 151.5 355.4 153.5Q358.0 150.7 359.3 152.6Q361.2 150.9 362.0 153.3Q364.0 151.2 364.9 152.7Q367.3 150.9 368.6 152.8Q371.1 150.1 372.2 152.1Q374.4 150.3 375.7 151.8M385.0 150.7C388.6 145.3 390.5 145.2 387.9 148.8C385.6 152.3 388.4 152.6 390.9 150.5Q393.1 150.1 394.8 150.9C394.8 147.9 398.9 147.5 398.1 150.1C397.6 151.8 395.2 151.7 399.6 150.3Q401.5 149.9 403.0 151.0" fill="none" stroke="#2b3036" stroke-width="0.90" stroke-linecap="round" opacity="0.60"/>
<path d="M30.0 190.3Q32.1 188.6 33.6 189.7Q35.6 188.0 36.9 189.9Q38.9 188.3 40.5 189.2C42.6 186.5 44.2 186.3 43.6 188.9C42.1 195.9 37.1 196.6 45.6 188.1Q47.4 187.0 48.8 187.8Q50.3 187.4 51.7 187.9C51.7 184.4 55.0 183.8 54.4 186.5C54.1 188.1 52.1 188.2 55.7 186.5Q57.6 185.6 59.1 186.9Q61.3 184.2 62.4 186.6C66.1 181.2 67.7 177.9 66.4 178.0C64.8 178.2 63.4 186.3 67.4 185.2Q69.2 183.4 70.2 185.4C73.5 181.9 74.9 179.5 73.6 179.7C72.0 179.9 71.2 185.4 75.2 184.2M81.1 182.8C84.8 174.4 86.6 174.1 84.0 179.6C81.7 184.5 84.4 184.7 86.7 182.4C89.0 180.6 90.9 180.3 90.4 182.9C88.8 190.2 82.7 191.0 92.8 182.1C95.0 179.8 96.8 179.6 96.2 182.2C94.7 189.4 89.0 190.1 98.5 181.4Q100.9 179.2 102.3 181.5" fill="none" stroke="#2b3036" stroke-width="0.90" stroke-linecap="round" opacity="0.55"/>
<path d="M35.1 211.9C39.1 202.1 41.2 201.8 38.3 207.5C36.0 212.7 39.0 212.8 41.5 210.4C41.2 208.0 44.5 207.4 44.0 210.1C43.7 211.7 41.7 211.8 45.2 210.1C46.9 208.1 48.3 208.0 47.7 210.6C46.5 216.5 42.2 217.1 49.5 209.8Q51.1 208.5 52.3 209.8Q54.6 208.9 56.6 209.5Q58.9 207.1 60.4 208.9Q62.7 206.0 64.0 207.7Q66.0 207.3 67.8 207.7" fill="none" stroke="#2b3036" stroke-width="0.90" stroke-linecap="round" opacity="0.50"/>
<path d="M33.0 230.7Q35.2 230.4 37.3 230.8Q39.4 228.2 40.7 230.0Q42.9 227.8 44.4 229.3Q46.4 227.8 47.8 229.4C47.5 225.8 51.7 225.0 51.1 227.7C50.8 229.4 48.3 229.6 52.7 227.7Q54.6 227.1 56.2 227.9" fill="none" stroke="#2b3036" stroke-width="0.90" stroke-linecap="round" opacity="0.50"/>
<path d="M30.8 297.9C33.9 289.7 36.1 289.2 33.7 294.5C31.6 299.3 34.8 299.2 37.2 296.6Q38.6 295.3 39.7 297.3Q41.2 295.6 42.4 295.9C41.9 293.2 46.1 292.1 45.7 294.8C45.5 296.5 42.9 296.8 47.3 294.7" fill="none" stroke="#2b3036" stroke-width="0.90" stroke-linecap="round" opacity="0.50"/>
<path d="M30.8 319.8Q33.1 318.2 34.6 319.9Q36.6 317.8 37.7 319.3Q39.3 318.4 40.6 318.6Q43.1 317.0 45.0 318.3Q47.5 316.6 49.3 317.7Q51.2 316.6 52.8 317.4" fill="none" stroke="#2b3036" stroke-width="0.90" stroke-linecap="round" opacity="0.55"/>
<path d="M146.1 313.8C150.7 305.9 152.9 305.8 149.4 311.0C146.5 315.8 149.5 316.2 152.3 314.1Q154.0 314.4 155.6 314.8Q158.6 312.5 160.2 314.7Q162.2 313.0 163.1 314.4C165.1 312.3 166.4 312.2 165.6 314.7C164.2 319.0 160.0 319.1 167.3 314.2Q169.4 312.2 170.2 314.1Q171.7 313.9 172.9 314.6C173.1 311.1 177.2 310.8 176.4 313.5C175.8 315.1 173.4 314.9 177.8 313.6C178.0 311.0 181.1 310.7 180.3 313.3C179.7 315.0 177.9 314.8 181.4 313.5M193.9 313.6C198.8 305.2 201.0 305.2 197.6 310.0C194.7 314.5 197.9 314.9 200.8 312.8Q203.2 312.6 205.0 313.9Q206.6 313.0 207.7 313.6Q209.5 312.3 210.5 313.6C213.0 311.0 214.7 310.9 213.9 313.4C211.7 320.4 206.3 320.6 216.1 312.9C219.4 309.4 221.1 306.8 220.0 306.9C218.6 306.9 216.8 313.3 220.4 312.7Q222.5 312.3 224.2 313.3Q226.8 311.3 228.3 312.8Q231.1 310.5 232.4 313.0Q234.3 312.1 235.6 313.1Q238.3 311.5 240.1 312.7M252.9 311.3C257.6 302.7 259.5 302.6 256.2 308.0C253.4 312.9 256.1 313.3 258.7 311.2Q261.1 309.8 262.2 312.2C262.7 308.7 265.7 308.4 264.9 311.0C264.4 312.7 262.6 312.5 266.0 311.2C266.0 308.6 269.6 308.3 268.8 310.9C268.3 312.5 266.1 312.4 270.1 311.1Q272.8 309.5 274.4 311.2Q277.1 309.4 278.5 311.6C278.7 308.3 282.9 307.9 282.0 310.6C281.5 312.2 279.0 312.1 283.6 310.7Q286.1 309.1 287.5 311.1C291.2 307.1 293.1 304.3 291.8 304.3C290.3 304.3 288.3 311.4 292.2 310.7M278.1 305.7L285.1 304.5M298.0 310.7Q299.7 310.0 300.9 311.1Q302.9 310.2 304.4 311.1Q306.6 309.2 307.5 311.1Q309.9 309.3 311.3 310.7C311.6 307.4 315.0 307.1 314.1 309.7C313.6 311.3 311.7 311.2 315.3 309.9C315.3 307.3 319.3 307.0 318.4 309.6C317.9 311.2 315.6 311.1 319.9 309.7Q322.0 309.1 323.5 310.3C326.4 307.9 328.4 307.8 327.6 310.3C326.2 314.7 319.5 314.9 330.3 309.8Q332.2 308.4 333.0 310.3M320.8 304.5L325.5 303.4M346.1 308.4Q348.4 308.2 350.1 309.6C350.3 306.3 354.4 306.0 353.6 308.6C353.0 310.2 350.6 310.1 355.1 308.8Q357.8 307.4 359.4 309.6Q361.2 308.7 362.7 309.0M352.9 303.6L356.4 302.5M374.4 308.2Q376.6 308.2 378.7 308.9Q380.9 306.4 381.7 308.5Q384.3 306.3 385.5 308.8Q387.6 307.8 389.0 308.9Q390.8 307.9 392.3 308.2Q395.2 306.1 396.6 308.6M390.3 302.6L396.4 301.4" fill="none" stroke="#2b3036" stroke-width="0.90" stroke-linecap="round" opacity="0.70"/>
<path d="M144.7 340.2Q147.8 339.1 149.9 341.0Q152.6 340.3 154.9 340.9C155.0 337.8 158.9 337.5 158.0 340.2C157.5 341.8 155.3 341.6 159.4 340.3Q161.4 339.8 162.9 340.6Q165.1 338.6 166.0 340.6M161.3 335.1L165.6 334.0M183.4 340.4C188.5 331.0 190.4 331.0 187.1 336.3C184.2 341.1 187.0 341.5 189.7 339.5Q192.6 338.2 194.6 340.1Q197.7 338.4 199.7 340.2C202.2 337.7 203.8 337.6 203.0 340.2C201.1 346.0 195.9 346.1 205.1 339.6Q207.5 339.0 209.3 340.2C209.5 336.6 213.9 336.3 213.0 338.9C212.5 340.5 209.9 340.4 214.6 339.1C217.5 337.3 219.8 337.3 219.0 339.8C217.0 345.9 209.5 346.0 222.0 339.2Q224.2 337.8 225.5 339.3Q228.0 336.6 229.0 339.0Q231.6 338.3 233.6 339.3C233.8 336.1 237.8 335.8 237.0 338.4C236.4 340.0 234.1 339.9 238.4 338.6M210.5 334.0L217.8 332.8M255.9 337.6C261.2 327.4 263.1 327.4 259.5 333.8C256.3 339.5 259.1 339.9 261.6 337.8Q264.2 335.8 265.4 338.2Q267.5 337.6 269.4 338.1Q271.8 337.4 273.7 338.4Q276.1 336.5 277.4 338.0C277.3 335.1 282.2 334.8 281.3 337.4C280.8 339.0 277.9 338.9 283.1 337.6Q284.9 337.4 286.6 337.8Q289.1 336.9 290.9 337.8Q294.1 335.5 295.7 338.0C296.0 334.7 299.7 334.4 298.9 337.0C298.3 338.6 296.1 338.5 300.2 337.2Q302.8 335.5 304.3 337.3Q306.9 335.2 308.0 338.0Q310.6 335.0 311.3 337.6M322.7 337.2C327.6 329.1 329.9 329.1 326.5 333.7C323.6 338.0 326.9 338.4 329.9 336.3Q331.7 335.4 332.7 337.1Q335.2 334.8 336.0 337.3Q338.8 334.8 340.1 336.8Q342.5 334.3 343.2 337.3Q346.1 335.0 347.7 336.8M344.2 331.0L348.4 329.9M359.8 335.5Q361.3 335.6 362.6 336.6C362.9 333.2 366.6 332.9 365.7 335.5C365.2 337.1 363.0 337.0 367.0 335.7Q369.7 334.5 371.3 336.4C374.4 333.8 376.6 333.8 375.8 336.3C373.1 344.6 365.9 344.8 378.6 335.7C382.4 332.1 384.2 329.4 382.9 329.4C381.3 329.5 379.5 336.2 383.5 335.5M394.1 335.0C400.0 325.7 402.8 325.6 398.6 331.2C395.1 336.4 399.2 336.8 402.7 334.7C405.4 333.1 407.7 333.1 406.9 335.6C404.5 342.8 397.3 343.0 409.7 335.0C412.8 333.0 415.3 332.9 414.5 335.4C411.8 343.6 404.0 343.8 417.5 334.9M430.6 334.4C436.9 323.3 439.7 323.2 435.3 329.7C431.6 335.5 435.6 336.0 439.0 333.9Q441.0 333.3 442.4 334.6Q445.8 331.9 447.4 334.8" fill="none" stroke="#2b3036" stroke-width="1.15" stroke-linecap="round" opacity="0.85"/>
<path d="M107.4 367.0C113.0 357.6 115.5 357.5 111.8 362.8C108.5 367.6 112.3 367.9 115.5 365.8Q117.7 365.9 119.7 366.5Q121.5 365.6 122.7 366.9Q126.2 364.3 128.2 366.6Q131.2 365.5 133.6 366.2C133.6 362.9 138.3 362.5 137.5 365.1C137.0 366.8 134.2 366.6 139.2 365.3C139.0 362.7 143.5 362.3 142.7 365.0C142.2 366.6 139.5 366.5 144.4 365.1Q146.9 364.5 148.8 365.6Q152.0 364.3 154.4 365.3Q156.7 363.4 157.6 365.7Q160.2 363.6 161.5 365.2C164.0 362.8 165.7 362.7 164.9 365.3C163.1 370.8 157.8 371.0 167.1 364.7M177.6 363.7C183.2 354.8 186.0 354.7 181.9 360.3C178.5 365.3 182.6 365.7 186.0 363.6Q188.7 362.3 190.4 364.0Q193.0 362.4 194.5 364.3Q196.9 362.9 198.6 363.8Q201.1 362.0 202.7 363.5Q205.6 362.7 207.8 363.8M219.4 362.4Q221.2 362.5 222.6 363.6Q224.8 361.7 226.0 363.1Q228.0 362.0 229.2 363.5Q231.5 361.6 232.9 362.8Q236.0 360.3 237.4 363.1Q240.7 360.4 242.4 362.8Q245.7 360.3 247.5 362.8C249.9 360.0 251.5 360.0 250.7 362.5C248.0 370.9 243.0 371.0 252.7 361.9Q255.4 360.5 257.0 362.6Q260.0 359.7 261.2 362.3Q263.9 360.3 265.4 361.8Q267.8 360.3 269.3 361.8Q272.0 359.3 273.1 361.9Q275.6 360.5 277.5 361.3M254.5 356.4L260.1 355.2M287.3 360.3Q290.5 358.3 292.3 360.7Q295.1 360.3 297.7 360.4Q300.6 358.1 301.9 361.0Q305.3 358.8 307.6 360.5Q310.1 359.0 311.7 360.5Q315.1 358.2 317.2 360.2C321.1 355.6 323.0 352.5 321.7 352.6C320.2 352.6 318.1 360.3 322.0 359.6Q324.9 357.4 326.3 360.3Q329.1 357.8 330.5 360.2Q333.6 357.2 335.2 359.3Q338.6 357.1 340.6 359.5C343.6 357.0 345.8 356.9 345.0 359.5C342.3 367.9 335.3 368.1 347.8 358.9M361.4 358.1C366.4 350.0 368.8 349.9 365.2 354.9C362.2 359.4 365.7 359.8 368.8 357.7Q370.6 357.5 372.1 358.6Q375.0 355.5 376.1 358.4C380.5 353.7 382.6 350.5 381.1 350.5C379.3 350.6 377.2 358.4 381.8 357.7Q384.3 357.4 386.5 357.8Q389.4 355.8 391.2 357.6Q393.7 356.6 395.5 357.8Q399.0 355.7 401.2 357.4C404.2 355.1 406.5 355.0 405.7 357.5C403.9 363.2 396.6 363.4 408.6 356.9C410.9 354.9 412.7 354.8 411.9 357.3C410.2 362.8 404.6 362.9 414.1 356.8Q417.2 355.0 419.1 357.2M379.3 352.4L385.7 351.2" fill="none" stroke="#2b3036" stroke-width="1.15" stroke-linecap="round" opacity="0.85"/>
<path d="M245.6 381.3C250.7 374.5 253.6 374.5 249.8 378.9C246.5 383.0 250.6 383.4 254.2 381.4Q256.5 380.6 257.9 382.1C262.5 376.5 264.8 372.6 263.4 372.7C261.7 372.7 258.9 382.3 263.1 381.6Q265.8 380.1 267.3 381.8C272.1 376.3 274.6 372.3 273.0 372.4C271.2 372.4 268.3 382.2 273.0 381.5Q276.4 379.5 278.3 381.7M296.5 381.6C302.2 372.4 304.9 372.4 301.0 377.5C297.6 382.2 301.5 382.6 304.8 380.6C304.7 378.2 308.8 377.9 308.0 380.5C307.4 382.1 305.0 382.0 309.5 380.7Q312.2 378.9 313.7 381.1C316.1 378.9 317.8 378.9 317.0 381.4C314.9 387.8 309.3 387.9 319.3 380.9Q321.7 379.3 323.1 380.8Q325.5 379.6 327.2 380.7C329.8 378.7 331.6 378.7 330.8 381.2C328.1 389.3 322.1 389.4 333.2 380.6C333.3 377.7 337.3 377.5 336.4 380.1C335.9 381.7 333.5 381.5 337.8 380.3M346.3 380.4C351.5 372.7 354.2 372.6 350.5 377.2C347.3 381.4 351.1 381.9 354.5 379.8C358.6 376.4 360.7 373.4 359.2 373.5C357.3 373.5 355.3 380.8 360.0 380.1C362.9 378.2 365.3 378.1 364.5 380.6C362.2 387.3 354.7 387.5 367.4 380.1M376.8 380.0C382.6 368.7 384.7 368.6 380.8 375.1C377.5 380.9 380.5 381.4 383.3 379.3Q385.6 379.1 387.4 380.1C390.0 377.7 391.8 377.7 390.9 380.2C388.4 387.9 382.6 388.0 393.3 379.7Q395.9 378.6 397.8 379.7Q400.4 377.4 401.5 379.6Q404.1 378.7 405.8 380.1Q408.9 377.9 410.7 379.6M419.2 379.6C424.6 369.3 426.6 369.3 423.0 375.0C419.9 380.3 422.7 380.7 425.4 378.7Q427.7 377.8 429.2 379.3C432.9 375.1 434.7 372.1 433.6 372.1C432.2 372.2 430.0 379.6 433.6 379.0C436.0 377.0 437.9 377.0 437.0 379.5C434.4 387.2 428.6 387.3 439.4 379.0Q442.7 376.9 444.5 379.6" fill="none" stroke="#2b3036" stroke-width="1.15" stroke-linecap="round" opacity="0.85"/>
<path d="M241.0 404.3Q243.4 403.0 244.9 404.7Q247.6 401.9 248.7 404.3Q250.7 403.5 252.1 404.7Q254.9 403.6 257.3 403.8C259.8 401.8 261.6 401.8 260.8 404.3C258.9 410.1 253.0 410.2 263.2 403.7M270.1 403.5C276.1 392.7 278.6 392.7 274.5 398.9C271.0 404.5 274.6 405.0 277.8 402.9Q279.9 402.1 281.2 403.8Q283.7 401.1 284.3 403.8C284.6 400.3 288.3 400.0 287.5 402.6C287.0 404.3 284.8 404.1 288.8 402.8Q291.2 402.7 293.3 403.1C295.8 400.9 297.5 400.9 296.7 403.4C294.1 411.5 288.5 411.6 299.0 402.9Q301.6 402.4 303.8 403.3M317.7 401.8C323.5 391.1 325.8 391.1 321.8 397.6C318.3 403.4 321.7 403.8 324.7 401.8Q327.6 400.3 329.2 402.8Q331.6 401.7 333.5 402.6Q336.6 399.6 338.0 402.0Q340.3 400.1 341.1 402.5C341.2 399.0 345.7 398.7 344.9 401.3C344.4 402.9 341.7 402.8 346.5 401.4Q349.3 400.2 351.1 401.8C355.0 397.5 356.9 394.4 355.6 394.4C354.1 394.5 351.9 402.1 355.9 401.4C355.8 398.6 360.0 398.3 359.1 400.9C358.6 402.5 356.2 402.4 360.6 401.1C363.4 399.3 365.6 399.3 364.8 401.8C362.3 409.5 355.2 409.7 367.5 401.2C367.6 398.3 371.6 398.0 370.8 400.7C370.2 402.3 367.9 402.1 372.2 400.8M382.7 400.4C388.1 389.9 390.2 389.8 386.4 396.2C383.3 401.9 386.1 402.3 388.8 400.2Q391.3 398.6 392.5 401.0Q395.0 398.8 396.0 401.0Q399.4 398.4 401.2 400.4C401.2 397.5 405.4 397.2 404.6 399.8C404.1 401.5 401.6 401.3 406.1 400.0C406.1 397.4 409.8 397.1 409.0 399.7C408.5 401.4 406.3 401.2 410.3 399.9C410.3 397.3 414.3 397.0 413.4 399.6C412.9 401.2 410.6 401.1 414.8 399.8Q417.0 399.5 418.9 400.2Q421.2 399.3 423.0 399.9C427.7 394.3 430.1 390.3 428.6 390.3C426.8 390.3 423.9 400.4 428.5 399.7C433.2 394.8 435.6 391.2 434.0 391.2C432.0 391.3 429.5 400.3 434.4 399.5Q436.5 398.2 437.7 399.8M415.7 394.6L419.1 393.5" fill="none" stroke="#2b3036" stroke-width="1.15" stroke-linecap="round" opacity="0.85"/>
<path d="M244.8 428.5Q247.1 427.2 248.7 428.0C253.3 422.9 255.6 419.2 254.1 419.2C252.2 419.3 249.6 428.5 254.3 427.8C254.4 425.0 258.3 424.7 257.5 427.3C256.9 428.9 254.6 428.7 258.9 427.4Q262.2 425.3 264.0 427.7Q267.2 425.6 269.2 427.7C269.0 424.6 274.0 424.3 273.2 426.9C272.6 428.5 269.7 428.4 275.0 427.0Q277.4 425.8 278.9 427.5Q280.9 426.8 282.5 427.5Q285.8 425.2 287.6 427.7M302.7 425.9C307.5 417.0 309.5 416.9 306.1 422.5C303.1 427.6 305.9 428.0 308.5 426.0Q310.5 425.2 311.6 427.2C315.5 423.0 317.3 420.3 316.0 420.4C314.4 420.4 312.7 426.9 316.7 426.2C316.5 423.4 321.3 423.0 320.4 425.7C319.9 427.3 317.1 427.2 322.2 425.8C326.8 420.9 329.2 417.0 327.6 417.1C325.7 417.1 323.1 426.6 327.8 425.9Q330.2 425.0 331.8 426.4Q334.4 424.8 336.0 426.1Q339.5 423.4 341.3 425.7M354.5 424.8C359.0 417.8 361.2 417.8 358.0 422.2C355.2 426.3 358.3 426.7 361.2 424.6Q364.6 422.7 366.4 425.7Q369.9 423.3 371.9 425.5C376.4 420.0 378.6 416.4 377.2 416.4C375.5 416.5 373.0 425.3 377.3 424.6" fill="none" stroke="#2b3036" stroke-width="1.15" stroke-linecap="round" opacity="0.85"/>
<path d="M246.8 450.2C252.4 441.6 255.3 441.6 251.3 446.6C247.9 451.2 252.0 451.6 255.6 449.6C259.4 446.3 261.4 443.5 260.0 443.5C258.2 443.5 256.3 450.5 260.7 449.8Q262.9 448.1 263.9 450.1Q266.6 448.3 268.0 450.2Q270.1 449.1 271.3 450.4Q274.0 447.4 274.9 449.7C278.7 445.1 280.7 441.7 279.5 441.7C278.1 441.8 275.7 450.1 279.3 449.4Q281.8 448.7 283.7 449.8M269.0 444.2L274.7 443.1M294.6 448.2C300.3 438.2 302.8 438.2 298.7 444.5C295.2 450.1 298.8 450.5 301.9 448.5Q304.5 448.4 306.5 449.6Q309.2 446.7 310.1 449.0C312.9 446.7 315.0 446.6 314.2 449.2C311.4 457.8 304.7 458.0 316.9 448.6Q319.2 446.5 320.3 448.5C320.3 445.6 324.6 445.3 323.7 447.9C323.2 449.5 320.7 449.4 325.2 448.1C328.9 443.7 330.9 440.3 329.7 440.3C328.3 440.3 325.8 448.9 329.4 448.2M345.1 448.3Q348.3 446.3 350.2 448.5Q352.9 445.8 354.0 447.9Q357.1 445.5 358.8 447.6Q362.1 445.1 363.6 448.0C367.4 442.8 369.3 439.3 368.3 439.4C367.0 439.4 364.4 448.0 367.8 447.3Q370.5 446.8 372.7 448.0Q375.0 446.5 376.6 447.5Q379.1 446.6 381.3 447.0M371.2 441.8L375.2 440.7M395.2 446.8C400.6 439.0 403.5 438.9 399.6 443.5C396.3 447.7 400.5 448.1 404.0 446.0Q406.9 444.4 408.4 447.2C412.2 442.3 414.0 439.3 412.9 439.3C411.5 439.3 409.3 446.9 412.8 446.2Q416.1 444.2 418.1 446.1C417.9 443.3 422.8 443.0 422.0 445.6C421.5 447.2 418.5 447.1 423.8 445.8Q426.2 444.7 427.8 446.0M438.3 445.6C443.1 437.2 445.3 437.1 441.9 442.1C439.0 446.7 442.0 447.1 444.8 445.1Q447.0 445.2 449.2 445.5Q451.9 443.8 453.4 445.6Q455.6 443.8 456.6 445.5M449.5 440.0L456.8 438.8" fill="none" stroke="#2b3036" stroke-width="1.15" stroke-linecap="round" opacity="0.85"/>
<path d="M242.1 472.0C247.0 463.2 249.2 463.1 245.7 468.6C242.7 473.5 245.8 473.9 248.6 471.8Q251.4 469.8 252.6 473.0C257.2 467.5 259.4 464.1 257.9 464.1C256.1 464.2 253.8 472.6 258.4 471.9Q261.4 470.2 263.3 472.3Q266.0 469.7 267.0 472.4Q270.0 470.7 271.9 472.1Q274.8 469.7 276.4 471.6Q278.7 470.9 280.5 471.4Q283.8 469.8 286.1 471.3C286.2 468.1 290.2 467.8 289.4 470.4C288.9 472.0 286.5 471.9 290.9 470.6M297.5 470.9Q300.2 469.0 301.8 470.6C304.3 468.4 306.1 468.3 305.4 470.8C303.7 476.2 297.8 476.4 307.7 470.3Q310.7 468.7 312.4 470.8Q315.9 468.4 318.1 469.9M309.8 464.7L317.1 463.4M329.0 469.2Q331.0 468.1 332.0 470.1C332.2 466.5 336.3 466.2 335.5 468.8C334.9 470.4 332.6 470.3 336.9 468.9C340.3 465.5 342.0 462.7 340.9 462.7C339.4 462.8 337.5 469.7 341.2 469.0Q343.4 467.9 344.8 469.1Q348.0 467.1 350.1 468.9Q353.4 467.1 355.7 468.6Q358.6 467.5 361.0 468.4C360.9 465.5 365.4 465.2 364.5 467.8C364.0 469.4 361.4 469.3 366.2 467.9Q369.2 465.8 370.8 468.2Q373.9 466.2 375.7 468.2Q377.9 467.4 379.7 468.0M360.4 462.9L365.0 461.8M392.5 466.7Q394.6 464.9 395.3 467.6Q397.6 465.5 398.6 467.6Q400.6 466.4 402.1 467.0Q404.4 464.8 405.4 467.1Q408.2 465.3 409.9 467.2Q412.6 464.7 413.9 466.7Q417.1 464.4 419.0 466.6Q422.2 465.0 424.5 466.3Q427.5 465.5 430.1 465.9Q433.1 463.9 434.7 466.1" fill="none" stroke="#2b3036" stroke-width="1.15" stroke-linecap="round" opacity="0.85"/>
<path d="M51.2 493.7C55.8 487.4 58.2 487.3 54.7 491.6C51.8 495.7 55.3 496.1 58.4 494.1Q60.8 492.2 61.7 494.7C64.7 492.5 67.0 492.4 66.1 494.9C64.3 500.6 57.1 500.8 69.0 494.4Q70.9 494.0 72.3 494.9M69.4 488.9L74.7 487.8M88.3 494.2Q91.1 491.7 92.3 493.9Q94.5 492.2 95.5 494.2Q97.7 492.3 98.8 494.1Q102.1 492.1 104.3 493.8C104.4 490.8 108.4 490.6 107.6 493.2C107.1 494.8 104.7 494.6 109.1 493.3Q111.0 492.9 112.5 494.2Q115.4 491.0 116.5 493.6Q119.0 491.3 119.8 494.1M137.3 492.5C143.0 483.9 145.9 483.8 141.8 489.2C138.2 494.1 142.4 494.5 145.9 492.5C148.5 490.9 150.7 490.9 149.8 493.4C147.3 501.0 140.5 501.1 152.6 492.8Q155.6 490.5 157.1 492.8Q159.8 490.7 160.9 493.4C161.0 489.8 166.0 489.5 165.1 492.1C164.6 493.7 161.6 493.6 167.0 492.3Q168.9 492.2 170.8 492.5Q173.1 490.2 173.9 492.5Q175.8 491.8 177.1 492.9C181.7 488.3 183.9 485.2 182.3 485.3C180.4 485.3 178.3 492.9 183.1 492.2Q186.6 489.8 188.4 492.1M174.0 486.9L180.1 485.8M198.1 491.3C202.3 484.5 204.2 484.4 201.1 488.9C198.5 493.0 201.2 493.4 203.8 491.4Q206.3 489.6 207.5 491.8Q209.7 490.6 211.0 491.8Q213.4 489.8 214.4 492.1C217.2 489.6 219.2 489.6 218.4 492.1C216.3 498.5 209.8 498.6 221.0 491.6Q223.2 490.8 224.7 492.3Q227.7 490.6 229.9 491.5C230.0 488.5 233.8 488.2 232.9 490.9C232.4 492.5 230.2 492.3 234.3 491.0C238.1 486.9 240.1 483.6 238.9 483.6C237.3 483.6 234.9 491.8 238.9 491.1M249.2 491.1Q252.0 489.5 253.5 491.5Q257.0 489.0 258.9 491.1Q261.9 488.4 263.1 491.1Q265.5 490.2 267.1 491.5M261.9 485.3L268.9 484.2M279.8 490.1C284.3 482.5 286.3 482.5 283.1 487.2C280.4 491.5 283.2 491.9 285.9 489.9Q289.0 488.0 290.8 490.2Q293.3 488.5 294.6 490.6Q297.6 489.9 300.1 490.7Q303.0 488.5 304.4 490.8C304.6 487.1 309.2 486.9 308.4 489.5C307.8 491.1 305.1 490.9 310.1 489.6Q312.6 488.0 314.0 490.1Q317.0 488.0 318.6 490.0Q321.2 489.0 323.0 490.1M340.7 489.5Q343.1 488.6 345.0 489.3Q347.7 487.8 349.3 489.6Q351.5 488.5 353.0 489.8Q356.2 487.0 357.7 489.8Q359.9 487.9 360.9 489.6Q363.1 488.4 364.5 489.1C367.6 486.9 369.9 486.8 369.0 489.3C366.9 495.7 359.5 495.9 372.0 488.8Q374.3 488.3 376.2 489.0Q379.1 487.4 381.0 489.0M394.7 488.4C399.9 479.0 402.1 479.0 398.5 484.4C395.5 489.4 398.5 489.8 401.3 487.8Q403.5 487.1 405.1 488.1C405.0 485.3 409.6 485.0 408.7 487.6C408.2 489.2 405.5 489.1 410.4 487.8C414.4 484.4 416.4 481.6 414.9 481.6C413.1 481.6 411.2 488.6 415.7 487.9" fill="none" stroke="#2b3036" stroke-width="1.15" stroke-linecap="round" opacity="0.85"/>
<path d="M51.5 519.5Q54.1 519.6 56.4 520.5Q59.2 519.1 61.2 520.0Q63.8 518.2 65.1 520.2Q68.2 517.8 69.9 520.1Q73.0 517.5 74.5 519.8Q77.3 518.6 79.2 520.1Q81.7 517.6 82.6 519.8Q85.6 517.2 86.9 520.0C91.1 514.7 93.2 511.3 91.9 511.3C90.3 511.4 87.9 519.9 91.9 519.2Q94.9 518.1 97.0 519.5Q99.6 517.8 101.2 519.4Q104.3 517.1 106.0 519.2M85.5 514.0L91.1 512.8M120.0 517.8C124.9 511.1 127.7 511.0 124.0 515.5C120.8 519.6 124.8 520.0 128.3 517.9C131.0 516.3 133.3 516.2 132.5 518.8C130.8 524.1 123.5 524.3 135.4 518.2Q137.6 516.4 138.5 518.7Q140.9 516.2 141.8 518.3Q145.4 515.8 147.3 518.6C150.2 515.8 152.3 515.8 151.5 518.3C149.4 524.6 142.9 524.8 154.1 517.7C158.2 512.1 160.3 508.1 159.2 508.1C157.7 508.2 154.8 518.2 158.5 517.5C158.4 514.7 162.6 514.4 161.7 517.0C161.2 518.6 158.8 518.5 163.3 517.2C162.9 514.6 168.0 514.3 167.1 516.9C166.6 518.5 163.6 518.4 169.0 517.0M183.4 516.0C189.4 506.0 192.2 505.9 187.9 512.3C184.2 517.9 188.2 518.3 191.6 516.2Q193.6 516.0 195.2 516.6Q197.7 515.3 199.2 516.9Q202.0 514.4 203.3 516.5Q205.7 516.0 207.8 516.5Q210.4 514.7 211.9 516.4C211.8 513.3 216.7 513.0 215.9 515.6C215.4 517.2 212.4 517.1 217.7 515.8M234.6 515.5Q237.7 514.3 239.8 516.2C244.1 511.2 246.2 508.0 244.8 508.0C243.1 508.0 240.9 516.0 245.2 515.3C248.9 510.1 251.0 506.2 249.9 506.3C248.6 506.3 245.8 515.8 249.1 515.2Q251.6 512.9 252.5 515.6Q255.4 513.3 256.9 515.6C257.1 512.2 261.0 511.9 260.2 514.5C259.7 516.1 257.3 516.0 261.6 514.6Q264.0 512.6 265.0 514.9C268.0 512.8 270.3 512.7 269.5 515.2C267.7 520.6 260.4 520.8 272.4 514.7Q275.0 512.9 276.5 514.7Q279.2 513.9 281.4 514.4Q283.7 512.2 284.6 514.5M265.6 509.3L270.2 508.2M299.6 514.3C305.2 503.1 307.3 503.1 303.6 509.3C300.4 514.9 303.3 515.4 306.0 513.3Q309.0 512.6 311.4 513.6Q314.0 512.8 316.0 513.9C320.4 509.1 322.5 505.9 321.1 505.9C319.3 506.0 317.1 514.0 321.6 513.3Q324.1 512.8 326.1 513.9M319.5 507.9L326.8 506.8M342.9 512.3C348.5 502.4 351.0 502.4 347.0 508.4C343.6 513.8 347.1 514.2 350.2 512.2Q352.2 511.3 353.2 513.3Q355.8 512.1 357.9 512.5C357.7 509.6 362.8 509.2 361.9 511.9C361.4 513.5 358.4 513.4 363.8 512.0Q366.3 509.9 367.4 512.1Q370.5 511.1 372.7 512.8Q374.9 511.0 376.1 512.3C376.0 509.1 380.8 508.8 380.0 511.4C379.5 513.0 376.6 512.9 381.8 511.5M371.3 506.6L375.8 505.5M392.3 510.7Q395.0 509.9 397.0 511.8C400.6 507.0 402.5 503.6 401.4 503.7C400.1 503.7 397.7 511.9 401.1 511.3Q403.3 509.7 404.4 511.5Q407.1 510.6 409.3 511.2Q412.0 508.9 413.0 511.7Q415.1 510.5 416.5 511.6C419.4 508.9 421.5 508.8 420.7 511.3C418.5 518.3 411.9 518.4 423.3 510.8C425.7 508.7 427.4 508.7 426.6 511.2C424.4 518.0 418.9 518.1 428.8 510.6Q431.4 509.5 433.2 510.6" fill="none" stroke="#2b3036" stroke-width="1.15" stroke-linecap="round" opacity="0.90"/>
<path d="M48.7 541.2Q51.6 540.5 53.9 541.5Q57.2 539.2 59.1 541.2C59.1 537.7 64.0 537.4 63.1 540.1C62.6 541.7 59.7 541.5 64.9 540.2C67.1 538.5 68.6 538.4 67.8 540.9C65.9 547.0 60.8 547.1 69.9 540.4Q72.4 539.4 74.1 541.0C78.1 535.7 80.0 532.2 78.9 532.3C77.5 532.3 75.0 540.8 78.6 540.1M94.0 538.9C99.9 530.1 102.9 530.0 98.6 535.7C94.9 540.8 99.2 541.2 102.9 539.1C107.0 534.9 109.2 531.4 107.8 531.5C106.0 531.5 103.6 540.1 108.0 539.4Q110.7 537.4 111.9 539.7Q114.3 537.0 115.0 539.6Q117.1 538.5 118.3 539.8Q120.6 538.2 122.0 539.2C122.0 536.3 126.0 536.0 125.2 538.6C124.6 540.2 122.3 540.1 126.6 538.8Q130.1 536.5 131.9 539.6Q134.9 536.9 136.2 539.6Q139.0 538.1 141.0 539.2M157.5 538.5C163.0 530.5 166.0 530.5 162.0 535.1C158.7 539.4 163.0 539.8 166.6 537.7Q169.1 537.6 171.2 538.7Q174.7 536.1 176.6 538.6Q179.5 536.7 181.2 538.5M197.3 537.9Q200.3 536.9 202.7 538.1Q205.5 535.1 206.6 537.4C206.6 534.4 211.0 534.1 210.2 536.7C209.6 538.3 207.0 538.2 211.7 536.8C211.6 534.2 216.0 533.9 215.2 536.6C214.7 538.2 212.0 538.0 216.8 536.7Q219.7 535.1 221.5 537.2Q224.7 535.1 226.4 537.6Q228.9 536.3 230.6 537.2M240.2 536.7Q242.3 535.1 243.4 536.3C246.0 534.4 248.0 534.3 247.1 536.8C244.5 544.9 238.3 545.1 249.7 536.3Q252.1 535.2 253.9 536.3Q257.1 534.5 259.1 536.2C263.3 532.1 265.3 529.1 263.9 529.2C262.1 529.2 260.1 536.5 264.5 535.8Q267.5 533.8 269.3 535.8Q271.6 533.7 272.5 535.8C272.3 532.9 277.4 532.5 276.6 535.2C276.1 536.8 273.0 536.6 278.5 535.3Q281.0 533.3 281.9 536.0M295.3 535.7Q298.5 534.5 300.9 535.7C303.3 533.0 304.9 533.0 304.0 535.5C301.8 542.6 296.8 542.7 306.1 535.0C308.7 532.9 310.7 532.9 309.9 535.4C307.1 544.0 300.7 544.1 312.4 534.8Q314.7 533.7 316.2 534.7Q319.3 533.3 321.4 534.9Q324.7 532.8 326.8 534.5Q329.7 532.0 331.0 534.6Q333.8 533.2 335.7 534.7M352.2 533.5Q354.4 531.7 355.1 534.4Q358.1 531.8 359.3 534.5Q362.2 533.4 364.5 533.8C367.6 531.6 370.0 531.5 369.2 534.0C366.4 542.7 358.7 542.8 372.2 533.5C375.0 531.4 377.1 531.3 376.3 533.9C373.9 541.1 367.2 541.3 378.9 533.3C383.2 529.1 385.3 525.9 383.8 526.0C382.0 526.0 379.9 533.8 384.4 533.1Q386.9 531.2 388.1 533.3Q391.1 530.6 392.2 533.5M406.1 533.1Q408.9 531.7 411.0 532.6Q414.3 530.5 416.2 532.7C419.3 530.4 421.7 530.3 420.9 532.8C418.6 539.8 411.0 540.0 423.9 532.3M416.3 526.9L420.4 525.9" fill="none" stroke="#2b3036" stroke-width="1.15" stroke-linecap="round" opacity="0.90"/>
<path d="M46.8 566.1Q49.6 565.7 52.1 566.5Q54.3 565.2 55.7 566.4C58.4 564.0 60.3 564.0 59.5 566.5C57.7 572.5 51.5 572.8 62.0 565.9Q65.0 564.9 67.5 565.8Q70.3 563.5 71.6 566.0Q73.9 564.9 75.5 566.0Q78.5 563.5 80.0 565.8M89.7 564.7C94.9 554.9 97.1 554.8 93.5 560.6C90.4 565.8 93.5 566.2 96.3 564.1Q98.4 562.4 99.3 564.9Q102.4 563.5 104.8 564.4C109.2 559.6 111.3 556.2 109.8 556.3C108.0 556.4 105.8 564.8 110.3 564.0Q113.0 561.9 114.5 563.9Q117.6 561.4 119.1 564.2Q122.1 562.5 124.0 564.3Q126.6 562.3 128.0 564.0Q130.7 561.1 131.7 563.7Q134.9 560.9 136.6 563.1Q138.6 561.8 139.8 563.3Q142.8 561.3 144.6 563.1M156.5 562.5Q158.9 560.5 159.9 562.8Q163.5 559.8 165.3 562.6Q168.5 559.7 170.2 561.9Q173.1 560.1 175.0 561.8C179.5 556.9 181.7 553.4 180.2 553.4C178.3 553.5 176.0 562.1 180.7 561.3C180.7 558.5 184.6 558.2 183.8 560.8C183.3 562.4 181.0 562.3 185.3 561.0C185.2 558.4 189.0 558.0 188.2 560.7C187.7 562.3 185.5 562.2 189.6 560.8Q192.9 558.9 195.0 561.1Q197.4 558.7 198.3 561.0C202.0 556.0 203.9 552.4 202.8 552.5C201.4 552.5 199.0 561.2 202.4 560.5C202.5 557.7 206.2 557.4 205.4 560.0C204.9 561.6 202.7 561.5 206.7 560.2Q209.5 558.3 211.2 560.2M218.9 559.9C224.1 551.3 226.6 551.3 223.0 556.3C219.9 561.0 223.5 561.3 226.6 559.2C226.2 556.8 231.2 556.4 230.4 559.1C229.9 560.7 226.9 560.6 232.2 559.2C231.8 556.6 236.8 556.2 236.0 558.9C235.5 560.5 232.5 560.4 237.9 559.0Q240.1 558.9 242.0 559.7C246.1 554.6 248.1 551.3 246.8 551.3C245.2 551.4 243.0 559.6 247.0 558.8M236.9 553.8L243.1 552.6M261.3 558.2Q263.8 556.1 264.7 559.1Q268.0 557.2 270.2 558.9C273.9 553.6 275.8 550.3 274.7 550.4C273.3 550.4 271.1 558.5 274.5 557.8Q277.5 555.9 279.2 558.0Q281.5 556.5 282.9 557.7C282.7 554.7 287.5 554.3 286.7 556.9C286.2 558.6 283.4 558.5 288.5 557.1Q290.7 556.6 292.5 557.8C292.6 554.3 296.7 554.0 295.9 556.6C295.4 558.2 293.0 558.1 297.3 556.7M311.7 556.6Q315.0 554.5 317.0 556.9C320.3 552.5 321.9 549.6 320.9 549.6C319.7 549.7 317.7 556.8 320.9 556.1Q323.9 554.4 325.8 556.1Q328.1 554.2 329.1 556.6Q331.2 555.1 332.5 555.9Q335.6 554.3 337.7 555.5C340.6 553.4 342.9 553.3 342.1 555.9C340.4 561.5 333.1 561.8 345.1 555.2Q348.6 552.8 350.5 555.7Q353.4 554.4 355.8 554.8Q358.2 554.0 360.2 554.8C364.7 549.2 367.0 545.3 365.6 545.3C363.8 545.4 361.1 555.1 365.6 554.4Q368.7 553.1 371.0 554.8M386.4 552.9C391.2 545.6 393.7 545.5 390.2 550.3C387.1 554.7 390.8 555.0 393.9 552.9Q396.0 551.2 396.7 553.9Q399.2 551.0 400.0 553.6C404.1 549.0 406.1 546.0 404.7 546.0C403.0 546.1 401.0 553.6 405.3 552.9Q408.0 551.2 409.6 552.9C409.4 549.9 414.5 549.5 413.7 552.2C413.2 553.8 410.1 553.7 415.6 552.3Q417.6 550.9 418.8 552.5C418.8 549.6 423.1 549.2 422.3 551.8C421.8 553.5 419.2 553.4 423.9 552.0Q426.8 550.3 428.4 552.4C432.1 547.1 434.0 543.4 433.0 543.5C431.7 543.5 429.2 552.6 432.4 551.9Q435.0 550.1 436.4 552.4C436.4 548.9 441.1 548.5 440.2 551.2C439.7 552.8 437.0 552.7 442.0 551.3" fill="none" stroke="#2b3036" stroke-width="1.15" stroke-linecap="round" opacity="0.90"/>
<path d="M52.4 585.2C58.0 577.1 60.9 577.0 57.0 581.8C53.6 586.2 57.9 586.6 61.5 584.5C61.3 582.1 65.6 581.8 64.8 584.4C64.2 586.0 61.7 585.9 66.3 584.5Q69.3 583.1 71.2 585.3C75.7 581.1 77.7 578.4 76.1 578.4C74.1 578.5 72.4 585.2 77.4 584.4Q79.1 584.1 80.5 584.5Q83.0 582.6 84.0 585.0Q87.2 583.4 89.6 584.2C93.4 579.1 95.3 575.4 94.3 575.4C92.9 575.4 90.3 584.6 93.7 583.9Q96.3 583.3 98.3 584.5C100.8 581.8 102.5 581.7 101.7 584.3C99.5 591.3 94.2 591.4 103.9 583.7Q107.3 581.3 109.2 583.4M121.9 582.9Q124.8 581.0 126.4 583.0C130.2 578.4 132.1 575.0 131.0 575.1C129.5 575.1 127.1 583.5 130.8 582.8Q133.0 580.9 134.0 582.7Q136.9 581.4 139.1 582.6Q141.3 581.3 142.7 582.5Q145.3 581.4 147.2 582.4Q150.5 580.1 152.5 582.2Q155.0 580.2 156.3 582.1Q159.8 580.0 162.0 581.8C165.9 578.3 167.8 575.6 166.4 575.6C164.6 575.7 162.8 582.4 167.3 581.7Q169.9 580.4 171.6 581.9Q174.8 579.2 176.2 582.1M191.2 581.1C197.3 570.9 200.1 570.8 195.9 576.7C192.3 582.0 196.4 582.4 199.9 580.3Q202.6 580.0 204.8 581.4Q207.8 579.7 209.9 580.6Q212.1 579.9 213.8 580.7Q217.0 577.9 218.4 580.8Q222.1 578.2 224.2 580.2C224.2 577.1 228.5 576.8 227.7 579.4C227.2 581.1 224.6 580.9 229.2 579.6C233.4 576.0 235.5 573.1 233.9 573.1C232.0 573.2 230.1 580.4 234.9 579.6Q237.5 577.7 238.6 580.2Q241.8 578.1 243.9 579.4M255.5 578.6Q258.3 578.4 260.8 579.3Q263.9 576.5 265.3 579.1Q268.5 576.3 270.2 578.6C270.2 575.7 274.3 575.4 273.5 578.0C273.0 579.7 270.5 579.5 275.0 578.2Q276.7 577.6 277.8 579.0Q280.2 577.1 281.4 578.8Q284.7 576.3 286.5 578.3C286.7 575.2 290.3 574.9 289.5 577.6C289.0 579.2 286.8 579.0 290.8 577.7Q292.8 577.1 294.1 578.7Q297.2 576.1 298.8 578.2M311.2 576.5C315.7 568.7 317.7 568.6 314.5 573.7C311.6 578.4 314.5 578.8 317.2 576.7C320.1 575.1 322.6 575.0 321.8 577.6C319.6 584.5 311.7 584.7 324.9 577.0Q327.5 574.9 328.7 576.9C331.3 574.8 333.3 574.7 332.5 577.2C330.5 583.4 324.3 583.6 335.0 576.7M345.7 575.5Q348.1 574.1 349.4 576.2Q351.9 574.0 352.9 576.7Q355.1 575.8 356.9 576.1Q359.2 574.2 360.3 576.3Q362.4 575.3 364.0 575.8Q366.6 574.0 368.0 576.1C368.2 572.8 371.9 572.4 371.1 575.1C370.6 576.7 368.4 576.6 372.4 575.2C376.1 570.2 378.2 566.4 377.1 566.4C375.7 566.5 373.0 576.0 376.4 575.3Q379.0 573.5 380.4 575.3Q382.6 574.1 384.0 575.5C387.1 573.1 389.4 573.0 388.6 575.5C386.7 581.5 379.3 581.8 391.5 574.9C391.5 572.0 395.8 571.7 394.9 574.3C394.4 576.0 391.9 575.8 396.5 574.5M404.5 573.9C409.6 565.8 412.2 565.7 408.4 570.8C405.2 575.5 409.0 575.9 412.2 573.8Q414.8 573.9 417.2 574.7Q419.3 573.8 421.0 574.3C423.9 572.0 426.2 571.9 425.4 574.4C423.2 581.2 416.1 581.4 428.2 573.8C431.9 570.2 433.7 567.5 432.4 567.5C430.8 567.6 429.0 574.3 433.1 573.6M416.5 568.7L421.6 567.5" fill="none" stroke="#2b3036" stroke-width="1.15" stroke-linecap="round" opacity="0.90"/>
<path d="M52.1 608.9Q54.3 608.7 56.4 609.1Q59.4 606.7 60.8 609.6Q63.4 606.4 64.3 609.1C64.4 605.8 68.3 605.5 67.5 608.1C67.0 609.7 64.7 609.6 68.9 608.2Q70.8 608.0 72.4 608.5Q75.2 606.4 76.8 608.2Q78.9 607.4 80.5 608.6Q83.2 605.5 84.0 608.3M63.4 603.2L69.3 602.0M99.1 607.1Q101.5 606.5 103.4 607.6Q106.0 606.5 108.0 607.7Q111.4 604.7 113.1 607.1Q115.2 606.0 116.6 607.1Q118.7 605.9 120.1 606.5M128.8 606.4Q132.0 605.0 134.2 606.6C138.3 600.5 140.4 596.5 139.2 596.5C137.8 596.6 135.1 606.5 138.7 605.8Q141.6 603.4 142.9 606.1Q145.6 604.9 147.5 606.2C147.4 602.6 152.7 602.2 151.9 604.9C151.4 606.5 148.2 606.4 153.8 605.0Q156.3 602.8 157.3 605.3M167.7 603.8C172.7 596.9 175.5 596.8 171.7 601.4C168.5 605.7 172.6 606.1 176.0 603.9C179.6 599.7 181.5 596.2 180.4 596.2C178.9 596.3 176.6 604.9 180.2 604.2Q183.0 602.3 184.7 604.1C184.7 601.2 188.6 600.9 187.8 603.5C187.3 605.1 185.0 605.0 189.2 603.6Q191.0 603.3 192.4 604.2Q195.3 603.3 197.9 603.7C200.5 601.5 202.5 601.4 201.7 604.0C199.5 611.3 193.1 611.5 204.2 603.4Q207.5 601.5 209.4 603.8Q212.2 600.7 213.3 603.3M202.6 597.9L206.4 596.8M222.0 602.1Q224.9 601.4 227.0 602.9Q230.2 600.7 232.2 602.7C235.1 600.2 237.2 600.1 236.5 602.6C234.6 608.6 227.7 608.9 239.2 602.0Q242.5 599.6 244.1 602.6C244.4 598.9 248.2 598.6 247.4 601.2C246.9 602.8 244.6 602.7 248.7 601.4Q251.1 600.9 253.0 602.0M263.3 600.9Q265.5 599.1 266.4 601.5Q269.6 598.8 271.4 600.7Q274.3 598.9 276.0 601.1C275.9 597.7 281.1 597.3 280.3 600.0C279.8 601.6 276.7 601.5 282.2 600.1Q284.3 599.1 285.6 601.0C285.7 597.4 290.0 597.0 289.2 599.6C288.7 601.3 286.2 601.1 290.8 599.8Q293.6 599.2 295.9 600.4M312.3 598.4C316.6 591.1 318.8 591.1 315.6 595.8C312.8 600.2 315.9 600.6 318.7 598.5C322.1 595.3 323.9 592.5 322.6 592.6C321.1 592.7 319.3 599.5 323.2 598.7Q325.3 597.2 326.3 599.5Q329.1 596.8 330.4 598.9C332.7 596.5 334.3 596.4 333.5 598.9C331.4 605.8 326.3 606.0 335.6 598.4Q337.7 597.2 338.8 599.0Q342.2 596.4 344.1 598.5Q347.3 597.2 349.6 598.4Q352.4 595.6 353.5 598.1Q356.7 596.0 358.9 597.6C363.2 592.9 365.3 589.5 363.8 589.5C362.0 589.6 359.8 597.9 364.3 597.2M371.1 596.3Q372.6 596.2 373.9 597.0Q376.9 596.5 379.6 596.7Q382.5 596.0 385.0 596.7Q387.4 595.2 388.9 596.7M399.3 595.2C404.7 586.0 407.4 585.9 403.4 591.7C400.1 596.9 403.9 597.3 407.2 595.1C406.8 592.7 411.7 592.4 410.9 595.0C410.4 596.6 407.5 596.5 412.7 595.1Q415.0 594.0 416.6 595.3Q419.0 594.8 421.1 595.1M433.9 594.0Q436.4 594.1 438.7 594.9C438.7 591.5 443.5 591.1 442.7 593.8C442.2 595.4 439.3 595.3 444.4 593.9Q447.1 593.3 449.4 594.0Q451.9 593.4 453.9 593.9" fill="none" stroke="#2b3036" stroke-width="1.15" stroke-linecap="round" opacity="0.90"/>
<path d="M55.5 634.0C60.9 625.0 63.6 624.9 59.7 630.5C56.4 635.6 60.3 635.9 63.6 633.8C67.2 629.2 69.1 625.6 68.0 625.6C66.6 625.7 64.1 634.8 67.7 634.0C67.5 631.2 72.2 630.8 71.4 633.4C70.9 635.1 68.1 635.0 73.1 633.6Q76.0 631.5 77.6 633.8Q80.3 632.7 82.4 633.5C82.2 630.6 87.1 630.2 86.3 632.8C85.8 634.4 82.9 634.3 88.1 632.9M99.6 632.9C104.9 624.1 107.5 624.0 103.8 629.0C100.6 633.7 104.5 634.0 107.8 631.9C111.2 627.6 113.0 624.1 112.0 624.1C110.7 624.2 108.3 632.9 111.6 632.1C115.1 627.6 117.0 624.3 115.9 624.3C114.5 624.4 112.3 632.7 115.7 631.9Q118.7 630.6 121.0 631.9C123.7 629.7 125.7 629.6 125.0 632.1C122.8 639.1 116.3 639.4 127.6 631.5Q130.5 630.0 132.3 631.9C135.0 629.2 136.9 629.1 136.2 631.7C134.6 637.0 128.4 637.3 138.6 631.0Q141.0 629.2 142.4 631.0Q145.1 628.9 146.5 631.3Q149.5 628.2 150.7 631.3Q153.0 629.1 154.2 630.8C154.4 627.5 158.1 627.1 157.3 629.7C156.8 631.4 154.6 631.3 158.6 629.9M174.6 629.2Q176.5 629.0 178.2 629.9Q180.6 628.8 182.5 629.4C186.3 623.6 188.3 619.5 187.2 619.6C186.0 619.6 183.2 629.6 186.5 628.9C186.2 626.1 191.1 625.7 190.3 628.3C189.8 629.9 186.9 629.9 192.1 628.4C194.2 626.6 195.9 626.6 195.1 629.1C193.4 634.6 188.2 634.8 197.2 628.5M189.0 623.4L195.6 622.1M208.8 628.2C213.4 619.3 215.4 619.3 212.2 624.3C209.5 629.0 212.4 629.4 215.0 627.3C214.5 624.9 219.8 624.4 219.0 627.1C218.5 628.7 215.4 628.6 220.9 627.2C223.7 625.4 225.9 625.3 225.1 627.8C223.3 633.9 216.1 634.2 228.0 627.2Q231.1 625.7 233.1 627.7M246.1 626.5Q248.0 625.6 249.3 627.0C252.0 624.2 253.9 624.1 253.2 626.6C250.7 634.8 244.7 635.0 255.6 626.0C255.5 623.1 259.6 622.7 258.8 625.4C258.3 627.0 255.9 626.9 260.3 625.5Q263.1 625.1 265.6 626.2Q268.1 623.5 269.2 625.6C269.2 622.5 273.5 622.1 272.7 624.8C272.2 626.4 269.7 626.3 274.3 624.9Q277.3 623.5 279.5 624.9Q282.5 622.6 283.9 625.5M300.8 623.5C305.6 615.2 307.8 615.1 304.4 620.3C301.5 625.0 304.7 625.4 307.6 623.3Q309.4 622.9 310.6 624.4Q313.9 621.3 315.4 624.0C315.3 620.5 320.4 620.1 319.6 622.8C319.1 624.4 316.1 624.3 321.5 622.9Q324.8 621.1 326.8 623.5Q329.4 621.1 330.7 623.0Q332.9 621.2 334.2 622.8Q336.9 620.4 338.0 623.1Q340.7 620.0 341.5 622.9Q344.2 621.8 346.2 622.8Q348.9 621.0 350.5 622.5Q353.6 621.1 355.9 621.9M319.9 617.7L324.5 616.5" fill="none" stroke="#2b3036" stroke-width="1.15" stroke-linecap="round" opacity="0.90"/>
<rect x="162.3" y="91" width="157.1" height="74.5" fill="#eee8dc"/>
<path d="M171.9 91.5L192.4 91.5L193.2 165L172.7 165Z" fill="#8a6cbc"/>
<path d="M209.5 91.5L229.0 91.5L229.8 165L210.3 165Z" fill="#8a6cbc"/>
<path d="M246.0 91.5L264.8 91.5L265.6 165L246.8 165Z" fill="#8a6cbc"/>
<path d="M281.9 91.5L301.7 91.5L302.5 165L282.7 165Z" fill="#8a6cbc"/>
<rect x="162.3" y="160" width="157.1" height="5.5" fill="#d9d2cf" opacity=".6"/>
<polygon points="319.4,105.0 330.0,104.0 326.0,176.0 319.4,170.0" fill="#d9d1ea" />
<polygon points="342.8,101.1 429.6,121.2 417.4,190.8 326.3,182.8" fill="#ece5d8" />
<polygon points="356.2,104.2 373.3,108.2 359.9,185.7 341.0,184.0" fill="#7d5ba6" />
<polygon points="389.9,112.0 407.6,116.1 396.6,188.9 377.0,187.2" fill="#7d5ba6" />
<polygon points="421.0,119.2 429.6,121.2 417.4,190.8 408.8,190.0" fill="#7d5ba6" />
<polygon points="429.6,124.3 458.9,126.7 458.9,190.0 417.4,190.0" fill="#ebe4d8" />
<polygon points="434.5,124.8 450.4,126.2 449.8,190.0 433.3,190.0" fill="#74529f" />
<ellipse cx="455" cy="135" rx="3.5" ry="6" fill="#b58a5e" opacity=".6"/>
<ellipse cx="449" cy="132" rx="4" ry="4" fill="#5b3a6e" opacity=".7"/>
<path d="M102.2 187.2Q116 182 129.9 180.2L160 176.5L199.1 176.8L234 177L280 180.5L331.4 182.1L400 184L463 185.5L463 299.5L420 302.5L380.9 304.7L300 305.5L196.5 304.7L160 306.5L131.6 307.8Q128 260 102.2 187.2Z" fill="#46339c"/>
<polygon points="331.4,182.1 463.0,185.5 463.0,299.5 380.9,304.7 324.6,304.0" fill="#5b3d9f" />
<polygon points="410.0,186.0 463.0,186.0 463.0,299.5 381.0,304.5" fill="#4f3599" />
<polygon points="210.0,231.7 214.0,178.0 234.0,177.5 196.5,304.7" fill="#3a2a88" opacity=".5"/>
<polygon points="210.0,231.7 331.0,183.0 316.0,304.0 196.5,304.7" fill="#4c39a8" opacity=".4"/>
<polygon points="316.0,181.5 331.4,181.5 324.6,304.5 305.8,304.0" fill="#ebe5ef" />
<polygon points="326.5,182.0 331.4,181.5 324.6,304.5 319.0,304.3" fill="#cfc2e0" opacity=".6"/>
<circle cx="276.1" cy="260" r="6" fill="#f1ede6"/>
<circle cx="417.8" cy="280.2" r="5" fill="#f1ede6"/>
<ellipse cx="462" cy="258" rx="10" ry="13" fill="#ece6da"/>
<ellipse cx="454" cy="284" rx="10" ry="11" fill="#e9dfd0"/>
<ellipse cx="458" cy="288" rx="5" ry="5" fill="#c99a70" opacity=".7"/>
<ellipse cx="456" cy="202" rx="4" ry="4" fill="#2c1f55" opacity=".7"/>
<path d="M214 178Q220 190 224 200M232 176Q240 196 236 212M268 205L272 214" fill="none" stroke="#b7a8df" stroke-width="1" opacity=".9"/>
<path d="M22.5 263.4L100.4 183.7L104 188Q118 232 126.5 262Q131 290 131.6 306L130 318L93.5 353.4Z" fill="#5a3fb2"/>
<g clip-path="url(#flapc)" fill="#ede8da">
<path d="M86.9 257.9C88.2 236.8 78.0 226.2 84.9 211.7C90.1 204.8 100.3 206.4 103.1 214.6C105.2 230.6 92.3 237.4 86.9 257.9Z"/>
<path d="M88.2 258.7C103.1 245.4 102.9 231.0 117.4 226.2C125.6 225.1 131.7 233.5 128.2 241.1C119.1 253.3 105.5 248.7 88.2 258.7Z"/>
<path d="M88.6 259.8C107.5 256.7 114.8 244.6 129.1 248.5C136.3 252.1 136.8 262.5 130.0 266.8C116.3 272.2 107.7 260.9 88.6 259.8Z"/>
<path d="M88.0 261.3C102.6 273.0 116.5 270.2 122.9 283.2C124.9 290.9 117.6 298.2 109.9 296.2C96.9 289.8 99.7 275.9 88.0 261.3Z"/>
<path d="M86.3 261.9C85.7 281.7 96.3 291.4 89.8 305.1C84.8 311.7 74.6 310.3 71.5 302.6C68.9 287.7 81.6 281.1 86.3 261.9Z"/>
<path d="M85.0 261.1C70.8 274.4 71.4 288.6 57.3 293.5C49.2 294.5 43.0 286.3 46.2 278.8C54.8 266.6 68.3 271.1 85.0 261.1Z"/>
<path d="M84.6 259.6C67.1 259.4 58.2 270.0 45.9 263.8C40.0 258.9 41.4 248.6 48.3 245.5C61.8 242.7 67.6 255.3 84.6 259.6Z"/>
<path d="M85.2 258.4C70.8 246.0 56.7 248.1 50.5 234.7C48.7 226.9 56.3 219.8 64.0 222.2C76.9 229.3 73.8 243.1 85.2 258.4Z"/>
<circle cx="86.6" cy="259.9" r="7"/>
</g>
<circle cx="120" cy="240" r="3.5" fill="#e9e3d8"/>
<path d="M104 188Q118 232 126.5 262Q131 290 131.6 306" fill="none" stroke="#2e2070" stroke-width="1.6" opacity=".6"/>
<polygon points="2.5,346.7 12.4,350.3 21.4,361.9 84.3,368.2 229.8,368.2 233.4,379.9 235.2,493.1 220.9,498.5 166.9,501.2 105.8,488.6 59.1,480.6 57.3,477 30.4,478.8 2.5,468" fill="#6c5cab"/>
<g clip-path="url(#patc)">
<polygon points="21.0,360.0 84.0,365.0 84.0,375.0 60.0,374.0 30.0,372.0" fill="#cfc7e6" opacity=".85"/>
<polygon points="2.5,346.7 59.0,480.0 57.0,478.0 30.0,479.0 2.5,468.0" fill="#6352a2" opacity=".6"/>
<polygon points="166.0,368.0 175.0,368.0 170.0,501.0 164.0,501.0" fill="#5d4d9c" opacity=".5"/>
<g transform="translate(5.4 362.4) rotate(20)"><ellipse cx="0" cy="-7.5" rx="6" ry="9.4" fill="#cfc6ea" opacity=".7"/><ellipse cx="0" cy="-6" rx="4.3" ry="7.4" fill="#f3eff9"/><circle cx="0" cy="2" r="1.2" fill="#1c1633"/></g>
<g transform="translate(33.7 363.0) rotate(38)"><ellipse cx="0" cy="-7.5" rx="6" ry="9.4" fill="#cfc6ea" opacity=".7"/><ellipse cx="0" cy="-6" rx="4.3" ry="7.4" fill="#f3eff9"/><circle cx="0" cy="2" r="1.2" fill="#1c1633"/></g>
<g transform="translate(63.3 357.7) rotate(28)"><ellipse cx="0" cy="-7.5" rx="6" ry="9.4" fill="#cfc6ea" opacity=".7"/><ellipse cx="0" cy="-6" rx="4.3" ry="7.4" fill="#f3eff9"/><circle cx="0" cy="2" r="1.2" fill="#1c1633"/></g>
<g transform="translate(84.1 365.4) rotate(-28)"><ellipse cx="0" cy="-7.5" rx="6" ry="9.4" fill="#cfc6ea" opacity=".7"/><ellipse cx="0" cy="-6" rx="4.3" ry="7.4" fill="#f3eff9"/><circle cx="0" cy="2" r="1.2" fill="#1c1633"/></g>
<g transform="translate(113.6 359.3) rotate(-38)"><ellipse cx="0" cy="-7.5" rx="6" ry="9.4" fill="#cfc6ea" opacity=".7"/><ellipse cx="0" cy="-6" rx="4.3" ry="7.4" fill="#f3eff9"/><circle cx="0" cy="2" r="1.2" fill="#1c1633"/></g>
<g transform="translate(148.0 361.7) rotate(-38)"><ellipse cx="0" cy="-7.5" rx="6" ry="9.4" fill="#cfc6ea" opacity=".7"/><ellipse cx="0" cy="-6" rx="4.3" ry="7.4" fill="#f3eff9"/><circle cx="0" cy="2" r="1.2" fill="#1c1633"/></g>
<g transform="translate(173.4 361.8) rotate(20)"><ellipse cx="0" cy="-7.5" rx="6" ry="9.4" fill="#cfc6ea" opacity=".7"/><ellipse cx="0" cy="-6" rx="4.3" ry="7.4" fill="#f3eff9"/><circle cx="0" cy="2" r="1.2" fill="#1c1633"/></g>
<g transform="translate(198.4 358.5) rotate(-28)"><ellipse cx="0" cy="-7.5" rx="6" ry="9.4" fill="#cfc6ea" opacity=".7"/><ellipse cx="0" cy="-6" rx="4.3" ry="7.4" fill="#f3eff9"/><circle cx="0" cy="2" r="1.2" fill="#1c1633"/></g>
<g transform="translate(225.3 365.7) rotate(28)"><ellipse cx="0" cy="-7.5" rx="6" ry="9.4" fill="#cfc6ea" opacity=".7"/><ellipse cx="0" cy="-6" rx="4.3" ry="7.4" fill="#f3eff9"/><circle cx="0" cy="2" r="1.2" fill="#1c1633"/></g>
<g transform="translate(251.2 364.4) rotate(20)"><ellipse cx="0" cy="-7.5" rx="6" ry="9.4" fill="#cfc6ea" opacity=".7"/><ellipse cx="0" cy="-6" rx="4.3" ry="7.4" fill="#f3eff9"/><circle cx="0" cy="2" r="1.2" fill="#1c1633"/></g>
<g transform="translate(22.7 377.6) rotate(-28)"><ellipse cx="0" cy="-7.5" rx="6" ry="9.4" fill="#cfc6ea" opacity=".7"/><ellipse cx="0" cy="-6" rx="4.3" ry="7.4" fill="#f3eff9"/><circle cx="0" cy="2" r="1.2" fill="#1c1633"/></g>
<g transform="translate(50.6 382.9) rotate(28)"><ellipse cx="0" cy="-7.5" rx="6" ry="9.4" fill="#cfc6ea" opacity=".7"/><ellipse cx="0" cy="-6" rx="4.3" ry="7.4" fill="#f3eff9"/><circle cx="0" cy="2" r="1.2" fill="#1c1633"/></g>
<g transform="translate(73.0 377.3) rotate(28)"><ellipse cx="0" cy="-7.5" rx="6" ry="9.4" fill="#cfc6ea" opacity=".7"/><ellipse cx="0" cy="-6" rx="4.3" ry="7.4" fill="#f3eff9"/><circle cx="0" cy="2" r="1.2" fill="#1c1633"/></g>
<g transform="translate(105.7 381.7) rotate(-15)"><ellipse cx="0" cy="-7.5" rx="6" ry="9.4" fill="#cfc6ea" opacity=".7"/><ellipse cx="0" cy="-6" rx="4.3" ry="7.4" fill="#f3eff9"/><circle cx="0" cy="2" r="1.2" fill="#1c1633"/></g>
<g transform="translate(131.2 385.8) rotate(-38)"><ellipse cx="0" cy="-7.5" rx="6" ry="9.4" fill="#cfc6ea" opacity=".7"/><ellipse cx="0" cy="-6" rx="4.3" ry="7.4" fill="#f3eff9"/><circle cx="0" cy="2" r="1.2" fill="#1c1633"/></g>
<g transform="translate(158.1 386.2) rotate(20)"><ellipse cx="0" cy="-7.5" rx="6" ry="9.4" fill="#cfc6ea" opacity=".7"/><ellipse cx="0" cy="-6" rx="4.3" ry="7.4" fill="#f3eff9"/><circle cx="0" cy="2" r="1.2" fill="#1c1633"/></g>
<g transform="translate(181.9 385.0) rotate(28)"><ellipse cx="0" cy="-7.5" rx="6" ry="9.4" fill="#cfc6ea" opacity=".7"/><ellipse cx="0" cy="-6" rx="4.3" ry="7.4" fill="#f3eff9"/><circle cx="0" cy="2" r="1.2" fill="#1c1633"/></g>
<g transform="translate(209.4 386.4) rotate(20)"><ellipse cx="0" cy="-7.5" rx="6" ry="9.4" fill="#cfc6ea" opacity=".7"/><ellipse cx="0" cy="-6" rx="4.3" ry="7.4" fill="#f3eff9"/><circle cx="0" cy="2" r="1.2" fill="#1c1633"/></g>
<g transform="translate(240.8 378.0) rotate(-28)"><ellipse cx="0" cy="-7.5" rx="6" ry="9.4" fill="#cfc6ea" opacity=".7"/><ellipse cx="0" cy="-6" rx="4.3" ry="7.4" fill="#f3eff9"/><circle cx="0" cy="2" r="1.2" fill="#1c1633"/></g>
<g transform="translate(260.4 379.2) rotate(38)"><ellipse cx="0" cy="-7.5" rx="6" ry="9.4" fill="#cfc6ea" opacity=".7"/><ellipse cx="0" cy="-6" rx="4.3" ry="7.4" fill="#f3eff9"/><circle cx="0" cy="2" r="1.2" fill="#1c1633"/></g>
<g transform="translate(12.7 401.4) rotate(28)"><ellipse cx="0" cy="-7.5" rx="6" ry="9.4" fill="#cfc6ea" opacity=".7"/><ellipse cx="0" cy="-6" rx="4.3" ry="7.4" fill="#f3eff9"/><circle cx="0" cy="2" r="1.2" fill="#1c1633"/></g>
<g transform="translate(36.3 400.0) rotate(20)"><ellipse cx="0" cy="-7.5" rx="6" ry="9.4" fill="#cfc6ea" opacity=".7"/><ellipse cx="0" cy="-6" rx="4.3" ry="7.4" fill="#f3eff9"/><circle cx="0" cy="2" r="1.2" fill="#1c1633"/></g>
<g transform="translate(62.1 400.9) rotate(28)"><ellipse cx="0" cy="-7.5" rx="6" ry="9.4" fill="#cfc6ea" opacity=".7"/><ellipse cx="0" cy="-6" rx="4.3" ry="7.4" fill="#f3eff9"/><circle cx="0" cy="2" r="1.2" fill="#1c1633"/></g>
<g transform="translate(87.5 402.9) rotate(38)"><ellipse cx="0" cy="-7.5" rx="6" ry="9.4" fill="#cfc6ea" opacity=".7"/><ellipse cx="0" cy="-6" rx="4.3" ry="7.4" fill="#f3eff9"/><circle cx="0" cy="2" r="1.2" fill="#1c1633"/></g>
<g transform="translate(116.8 406.0) rotate(28)"><ellipse cx="0" cy="-7.5" rx="6" ry="9.4" fill="#cfc6ea" opacity=".7"/><ellipse cx="0" cy="-6" rx="4.3" ry="7.4" fill="#f3eff9"/><circle cx="0" cy="2" r="1.2" fill="#1c1633"/></g>
<g transform="translate(144.8 406.3) rotate(-15)"><ellipse cx="0" cy="-7.5" rx="6" ry="9.4" fill="#cfc6ea" opacity=".7"/><ellipse cx="0" cy="-6" rx="4.3" ry="7.4" fill="#f3eff9"/><circle cx="0" cy="2" r="1.2" fill="#1c1633"/></g>
<g transform="translate(173.6 406.9) rotate(38)"><ellipse cx="0" cy="-7.5" rx="6" ry="9.4" fill="#cfc6ea" opacity=".7"/><ellipse cx="0" cy="-6" rx="4.3" ry="7.4" fill="#f3eff9"/><circle cx="0" cy="2" r="1.2" fill="#1c1633"/></g>
<g transform="translate(198.7 398.6) rotate(28)"><ellipse cx="0" cy="-7.5" rx="6" ry="9.4" fill="#cfc6ea" opacity=".7"/><ellipse cx="0" cy="-6" rx="4.3" ry="7.4" fill="#f3eff9"/><circle cx="0" cy="2" r="1.2" fill="#1c1633"/></g>
<g transform="translate(227.6 406.6) rotate(38)"><ellipse cx="0" cy="-7.5" rx="6" ry="9.4" fill="#cfc6ea" opacity=".7"/><ellipse cx="0" cy="-6" rx="4.3" ry="7.4" fill="#f3eff9"/><circle cx="0" cy="2" r="1.2" fill="#1c1633"/></g>
<g transform="translate(255.0 402.7) rotate(20)"><ellipse cx="0" cy="-7.5" rx="6" ry="9.4" fill="#cfc6ea" opacity=".7"/><ellipse cx="0" cy="-6" rx="4.3" ry="7.4" fill="#f3eff9"/><circle cx="0" cy="2" r="1.2" fill="#1c1633"/></g>
<g transform="translate(23.1 419.1) rotate(38)"><ellipse cx="0" cy="-7.5" rx="6" ry="9.4" fill="#cfc6ea" opacity=".7"/><ellipse cx="0" cy="-6" rx="4.3" ry="7.4" fill="#f3eff9"/><circle cx="0" cy="2" r="1.2" fill="#1c1633"/></g>
<g transform="translate(51.3 422.7) rotate(-38)"><ellipse cx="0" cy="-7.5" rx="6" ry="9.4" fill="#cfc6ea" opacity=".7"/><ellipse cx="0" cy="-6" rx="4.3" ry="7.4" fill="#f3eff9"/><circle cx="0" cy="2" r="1.2" fill="#1c1633"/></g>
<g transform="translate(72.8 417.6) rotate(38)"><ellipse cx="0" cy="-7.5" rx="6" ry="9.4" fill="#cfc6ea" opacity=".7"/><ellipse cx="0" cy="-6" rx="4.3" ry="7.4" fill="#f3eff9"/><circle cx="0" cy="2" r="1.2" fill="#1c1633"/></g>
<g transform="translate(105.5 426.9) rotate(-28)"><ellipse cx="0" cy="-7.5" rx="6" ry="9.4" fill="#cfc6ea" opacity=".7"/><ellipse cx="0" cy="-6" rx="4.3" ry="7.4" fill="#f3eff9"/><circle cx="0" cy="2" r="1.2" fill="#1c1633"/></g>
<g transform="translate(124.9 425.0) rotate(-28)"><ellipse cx="0" cy="-7.5" rx="6" ry="9.4" fill="#cfc6ea" opacity=".7"/><ellipse cx="0" cy="-6" rx="4.3" ry="7.4" fill="#f3eff9"/><circle cx="0" cy="2" r="1.2" fill="#1c1633"/></g>
<g transform="translate(155.1 418.5) rotate(-38)"><ellipse cx="0" cy="-7.5" rx="6" ry="9.4" fill="#cfc6ea" opacity=".7"/><ellipse cx="0" cy="-6" rx="4.3" ry="7.4" fill="#f3eff9"/><circle cx="0" cy="2" r="1.2" fill="#1c1633"/></g>
<g transform="translate(180.9 424.7) rotate(38)"><ellipse cx="0" cy="-7.5" rx="6" ry="9.4" fill="#cfc6ea" opacity=".7"/><ellipse cx="0" cy="-6" rx="4.3" ry="7.4" fill="#f3eff9"/><circle cx="0" cy="2" r="1.2" fill="#1c1633"/></g>
<g transform="translate(213.7 417.4) rotate(20)"><ellipse cx="0" cy="-7.5" rx="6" ry="9.4" fill="#cfc6ea" opacity=".7"/><ellipse cx="0" cy="-6" rx="4.3" ry="7.4" fill="#f3eff9"/><circle cx="0" cy="2" r="1.2" fill="#1c1633"/></g>
<g transform="translate(238.1 417.4) rotate(20)"><ellipse cx="0" cy="-7.5" rx="6" ry="9.4" fill="#cfc6ea" opacity=".7"/><ellipse cx="0" cy="-6" rx="4.3" ry="7.4" fill="#f3eff9"/><circle cx="0" cy="2" r="1.2" fill="#1c1633"/></g>
<g transform="translate(266.2 420.3) rotate(38)"><ellipse cx="0" cy="-7.5" rx="6" ry="9.4" fill="#cfc6ea" opacity=".7"/><ellipse cx="0" cy="-6" rx="4.3" ry="7.4" fill="#f3eff9"/><circle cx="0" cy="2" r="1.2" fill="#1c1633"/></g>
<g transform="translate(11.8 446.8) rotate(20)"><ellipse cx="0" cy="-7.5" rx="6" ry="9.4" fill="#cfc6ea" opacity=".7"/><ellipse cx="0" cy="-6" rx="4.3" ry="7.4" fill="#f3eff9"/><circle cx="0" cy="2" r="1.2" fill="#1c1633"/></g>
<g transform="translate(35.1 447.0) rotate(-15)"><ellipse cx="0" cy="-7.5" rx="6" ry="9.4" fill="#cfc6ea" opacity=".7"/><ellipse cx="0" cy="-6" rx="4.3" ry="7.4" fill="#f3eff9"/><circle cx="0" cy="2" r="1.2" fill="#1c1633"/></g>
<g transform="translate(60.1 437.8) rotate(-28)"><ellipse cx="0" cy="-7.5" rx="6" ry="9.4" fill="#cfc6ea" opacity=".7"/><ellipse cx="0" cy="-6" rx="4.3" ry="7.4" fill="#f3eff9"/><circle cx="0" cy="2" r="1.2" fill="#1c1633"/></g>
<g transform="translate(90.0 437.3) rotate(-38)"><ellipse cx="0" cy="-7.5" rx="6" ry="9.4" fill="#cfc6ea" opacity=".7"/><ellipse cx="0" cy="-6" rx="4.3" ry="7.4" fill="#f3eff9"/><circle cx="0" cy="2" r="1.2" fill="#1c1633"/></g>
<g transform="translate(113.0 441.1) rotate(-15)"><ellipse cx="0" cy="-7.5" rx="6" ry="9.4" fill="#cfc6ea" opacity=".7"/><ellipse cx="0" cy="-6" rx="4.3" ry="7.4" fill="#f3eff9"/><circle cx="0" cy="2" r="1.2" fill="#1c1633"/></g>
<g transform="translate(144.1 438.6) rotate(38)"><ellipse cx="0" cy="-7.5" rx="6" ry="9.4" fill="#cfc6ea" opacity=".7"/><ellipse cx="0" cy="-6" rx="4.3" ry="7.4" fill="#f3eff9"/><circle cx="0" cy="2" r="1.2" fill="#1c1633"/></g>
<g transform="translate(165.4 445.7) rotate(-15)"><ellipse cx="0" cy="-7.5" rx="6" ry="9.4" fill="#cfc6ea" opacity=".7"/><ellipse cx="0" cy="-6" rx="4.3" ry="7.4" fill="#f3eff9"/><circle cx="0" cy="2" r="1.2" fill="#1c1633"/></g>
<g transform="translate(195.1 446.6) rotate(-15)"><ellipse cx="0" cy="-7.5" rx="6" ry="9.4" fill="#cfc6ea" opacity=".7"/><ellipse cx="0" cy="-6" rx="4.3" ry="7.4" fill="#f3eff9"/><circle cx="0" cy="2" r="1.2" fill="#1c1633"/></g>
<g transform="translate(228.0 440.8) rotate(20)"><ellipse cx="0" cy="-7.5" rx="6" ry="9.4" fill="#cfc6ea" opacity=".7"/><ellipse cx="0" cy="-6" rx="4.3" ry="7.4" fill="#f3eff9"/><circle cx="0" cy="2" r="1.2" fill="#1c1633"/></g>
<g transform="translate(250.6 442.2) rotate(28)"><ellipse cx="0" cy="-7.5" rx="6" ry="9.4" fill="#cfc6ea" opacity=".7"/><ellipse cx="0" cy="-6" rx="4.3" ry="7.4" fill="#f3eff9"/><circle cx="0" cy="2" r="1.2" fill="#1c1633"/></g>
<g transform="translate(22.4 463.0) rotate(20)"><ellipse cx="0" cy="-7.5" rx="6" ry="9.4" fill="#cfc6ea" opacity=".7"/><ellipse cx="0" cy="-6" rx="4.3" ry="7.4" fill="#f3eff9"/><circle cx="0" cy="2" r="1.2" fill="#1c1633"/></g>
<g transform="translate(48.6 463.2) rotate(28)"><ellipse cx="0" cy="-7.5" rx="6" ry="9.4" fill="#cfc6ea" opacity=".7"/><ellipse cx="0" cy="-6" rx="4.3" ry="7.4" fill="#f3eff9"/><circle cx="0" cy="2" r="1.2" fill="#1c1633"/></g>
<g transform="translate(79.4 462.1) rotate(-28)"><ellipse cx="0" cy="-7.5" rx="6" ry="9.4" fill="#cfc6ea" opacity=".7"/><ellipse cx="0" cy="-6" rx="4.3" ry="7.4" fill="#f3eff9"/><circle cx="0" cy="2" r="1.2" fill="#1c1633"/></g>
<g transform="translate(101.3 464.2) rotate(-38)"><ellipse cx="0" cy="-7.5" rx="6" ry="9.4" fill="#cfc6ea" opacity=".7"/><ellipse cx="0" cy="-6" rx="4.3" ry="7.4" fill="#f3eff9"/><circle cx="0" cy="2" r="1.2" fill="#1c1633"/></g>
<g transform="translate(126.4 460.0) rotate(20)"><ellipse cx="0" cy="-7.5" rx="6" ry="9.4" fill="#cfc6ea" opacity=".7"/><ellipse cx="0" cy="-6" rx="4.3" ry="7.4" fill="#f3eff9"/><circle cx="0" cy="2" r="1.2" fill="#1c1633"/></g>
<g transform="translate(160.8 462.2) rotate(28)"><ellipse cx="0" cy="-7.5" rx="6" ry="9.4" fill="#cfc6ea" opacity=".7"/><ellipse cx="0" cy="-6" rx="4.3" ry="7.4" fill="#f3eff9"/><circle cx="0" cy="2" r="1.2" fill="#1c1633"/></g>
<g transform="translate(183.5 457.1) rotate(-38)"><ellipse cx="0" cy="-7.5" rx="6" ry="9.4" fill="#cfc6ea" opacity=".7"/><ellipse cx="0" cy="-6" rx="4.3" ry="7.4" fill="#f3eff9"/><circle cx="0" cy="2" r="1.2" fill="#1c1633"/></g>
<g transform="translate(209.2 462.8) rotate(-28)"><ellipse cx="0" cy="-7.5" rx="6" ry="9.4" fill="#cfc6ea" opacity=".7"/><ellipse cx="0" cy="-6" rx="4.3" ry="7.4" fill="#f3eff9"/><circle cx="0" cy="2" r="1.2" fill="#1c1633"/></g>
<g transform="translate(232.2 463.2) rotate(-38)"><ellipse cx="0" cy="-7.5" rx="6" ry="9.4" fill="#cfc6ea" opacity=".7"/><ellipse cx="0" cy="-6" rx="4.3" ry="7.4" fill="#f3eff9"/><circle cx="0" cy="2" r="1.2" fill="#1c1633"/></g>
<g transform="translate(265.3 457.6) rotate(-38)"><ellipse cx="0" cy="-7.5" rx="6" ry="9.4" fill="#cfc6ea" opacity=".7"/><ellipse cx="0" cy="-6" rx="4.3" ry="7.4" fill="#f3eff9"/><circle cx="0" cy="2" r="1.2" fill="#1c1633"/></g>
<g transform="translate(9.3 481.7) rotate(-15)"><ellipse cx="0" cy="-7.5" rx="6" ry="9.4" fill="#cfc6ea" opacity=".7"/><ellipse cx="0" cy="-6" rx="4.3" ry="7.4" fill="#f3eff9"/><circle cx="0" cy="2" r="1.2" fill="#1c1633"/></g>
<g transform="translate(36.8 480.5) rotate(20)"><ellipse cx="0" cy="-7.5" rx="6" ry="9.4" fill="#cfc6ea" opacity=".7"/><ellipse cx="0" cy="-6" rx="4.3" ry="7.4" fill="#f3eff9"/><circle cx="0" cy="2" r="1.2" fill="#1c1633"/></g>
<g transform="translate(64.1 484.4) rotate(-28)"><ellipse cx="0" cy="-7.5" rx="6" ry="9.4" fill="#cfc6ea" opacity=".7"/><ellipse cx="0" cy="-6" rx="4.3" ry="7.4" fill="#f3eff9"/><circle cx="0" cy="2" r="1.2" fill="#1c1633"/></g>
<g transform="translate(84.2 477.6) rotate(38)"><ellipse cx="0" cy="-7.5" rx="6" ry="9.4" fill="#cfc6ea" opacity=".7"/><ellipse cx="0" cy="-6" rx="4.3" ry="7.4" fill="#f3eff9"/><circle cx="0" cy="2" r="1.2" fill="#1c1633"/></g>
<g transform="translate(117.8 486.6) rotate(20)"><ellipse cx="0" cy="-7.5" rx="6" ry="9.4" fill="#cfc6ea" opacity=".7"/><ellipse cx="0" cy="-6" rx="4.3" ry="7.4" fill="#f3eff9"/><circle cx="0" cy="2" r="1.2" fill="#1c1633"/></g>
<g transform="translate(140.5 481.6) rotate(-38)"><ellipse cx="0" cy="-7.5" rx="6" ry="9.4" fill="#cfc6ea" opacity=".7"/><ellipse cx="0" cy="-6" rx="4.3" ry="7.4" fill="#f3eff9"/><circle cx="0" cy="2" r="1.2" fill="#1c1633"/></g>
<g transform="translate(170.9 480.2) rotate(-38)"><ellipse cx="0" cy="-7.5" rx="6" ry="9.4" fill="#cfc6ea" opacity=".7"/><ellipse cx="0" cy="-6" rx="4.3" ry="7.4" fill="#f3eff9"/><circle cx="0" cy="2" r="1.2" fill="#1c1633"/></g>
<g transform="translate(195.6 480.1) rotate(38)"><ellipse cx="0" cy="-7.5" rx="6" ry="9.4" fill="#cfc6ea" opacity=".7"/><ellipse cx="0" cy="-6" rx="4.3" ry="7.4" fill="#f3eff9"/><circle cx="0" cy="2" r="1.2" fill="#1c1633"/></g>
<g transform="translate(222.7 483.0) rotate(-15)"><ellipse cx="0" cy="-7.5" rx="6" ry="9.4" fill="#cfc6ea" opacity=".7"/><ellipse cx="0" cy="-6" rx="4.3" ry="7.4" fill="#f3eff9"/><circle cx="0" cy="2" r="1.2" fill="#1c1633"/></g>
<g transform="translate(249.0 480.8) rotate(-38)"><ellipse cx="0" cy="-7.5" rx="6" ry="9.4" fill="#cfc6ea" opacity=".7"/><ellipse cx="0" cy="-6" rx="4.3" ry="7.4" fill="#f3eff9"/><circle cx="0" cy="2" r="1.2" fill="#1c1633"/></g>
<g transform="translate(23.7 497.3) rotate(-28)"><ellipse cx="0" cy="-7.5" rx="6" ry="9.4" fill="#cfc6ea" opacity=".7"/><ellipse cx="0" cy="-6" rx="4.3" ry="7.4" fill="#f3eff9"/><circle cx="0" cy="2" r="1.2" fill="#1c1633"/></g>
<g transform="translate(48.7 504.4) rotate(20)"><ellipse cx="0" cy="-7.5" rx="6" ry="9.4" fill="#cfc6ea" opacity=".7"/><ellipse cx="0" cy="-6" rx="4.3" ry="7.4" fill="#f3eff9"/><circle cx="0" cy="2" r="1.2" fill="#1c1633"/></g>
<g transform="translate(73.1 499.2) rotate(28)"><ellipse cx="0" cy="-7.5" rx="6" ry="9.4" fill="#cfc6ea" opacity=".7"/><ellipse cx="0" cy="-6" rx="4.3" ry="7.4" fill="#f3eff9"/><circle cx="0" cy="2" r="1.2" fill="#1c1633"/></g>
<g transform="translate(105.0 499.4) rotate(-28)"><ellipse cx="0" cy="-7.5" rx="6" ry="9.4" fill="#cfc6ea" opacity=".7"/><ellipse cx="0" cy="-6" rx="4.3" ry="7.4" fill="#f3eff9"/><circle cx="0" cy="2" r="1.2" fill="#1c1633"/></g>
<g transform="translate(125.9 501.4) rotate(-15)"><ellipse cx="0" cy="-7.5" rx="6" ry="9.4" fill="#cfc6ea" opacity=".7"/><ellipse cx="0" cy="-6" rx="4.3" ry="7.4" fill="#f3eff9"/><circle cx="0" cy="2" r="1.2" fill="#1c1633"/></g>
<g transform="translate(158.0 498.0) rotate(-38)"><ellipse cx="0" cy="-7.5" rx="6" ry="9.4" fill="#cfc6ea" opacity=".7"/><ellipse cx="0" cy="-6" rx="4.3" ry="7.4" fill="#f3eff9"/><circle cx="0" cy="2" r="1.2" fill="#1c1633"/></g>
<g transform="translate(181.2 500.3) rotate(20)"><ellipse cx="0" cy="-7.5" rx="6" ry="9.4" fill="#cfc6ea" opacity=".7"/><ellipse cx="0" cy="-6" rx="4.3" ry="7.4" fill="#f3eff9"/><circle cx="0" cy="2" r="1.2" fill="#1c1633"/></g>
<g transform="translate(213.3 501.4) rotate(20)"><ellipse cx="0" cy="-7.5" rx="6" ry="9.4" fill="#cfc6ea" opacity=".7"/><ellipse cx="0" cy="-6" rx="4.3" ry="7.4" fill="#f3eff9"/><circle cx="0" cy="2" r="1.2" fill="#1c1633"/></g>
<g transform="translate(240.6 498.7) rotate(38)"><ellipse cx="0" cy="-7.5" rx="6" ry="9.4" fill="#cfc6ea" opacity=".7"/><ellipse cx="0" cy="-6" rx="4.3" ry="7.4" fill="#f3eff9"/><circle cx="0" cy="2" r="1.2" fill="#1c1633"/></g>
<g transform="translate(262.4 503.5) rotate(-38)"><ellipse cx="0" cy="-7.5" rx="6" ry="9.4" fill="#cfc6ea" opacity=".7"/><ellipse cx="0" cy="-6" rx="4.3" ry="7.4" fill="#f3eff9"/><circle cx="0" cy="2" r="1.2" fill="#1c1633"/></g>
</g>
<path d="M258 514L271.6 521Q275 530 273.3 538L234 562L213.6 572L179.4 575.6L169.2 565.3L186.3 551.7L217 544.8L240.9 527.7Z" fill="#e9e4da"/>
</g>
</svg></div>
  <div class="sw" style="left:879px"><div class="swc" style="background:#2d12b8"></div>
<div class="swl"><i style="left:6.8px"><svg class="ic" width="11" height="11" viewBox="0 0 20 20" fill="none" stroke="currentColor" stroke-width="1.6" stroke-linecap="round" stroke-linejoin="round"><path d="M2.2 11.2A7.9 7.9 0 1 1 9.2 17.9"/><path d="M0.4 9.3L2.2 11.6L4.6 9.8" /><circle cx="10" cy="10" r="1.5" fill="currentColor" stroke="none"/></svg></i><b style="left:18.9px">249&#176;</b><i style="left:41.3px"><svg class="ic" width="11" height="11" viewBox="0 0 20 20" fill="none" stroke="currentColor" stroke-width="1.6" stroke-linecap="round"><circle cx="10" cy="10" r="8"/><path d="M10 10H18"/><circle cx="10" cy="10" r="1.6" fill="currentColor" stroke="none"/></svg></i><b style="left:54.6px">90%</b><i style="left:77.3px"><svg class="ic" width="11" height="11" viewBox="0 0 20 20" fill="none" stroke="currentColor" stroke-width="1.6" stroke-linejoin="round"><path d="M1.5 14V1.5H14"/><path d="M3.7 16.2V3.7H16.2"/><rect x="6" y="6" width="12.5" height="12.5" rx="0.8"/></svg></i><b style="left:90.8px">0.72</b></div></div>
  <div class="sw" style="left:1013px"><div class="swc" style="background:#a05db4"></div>
<div class="swl"><i style="left:6.3px"><svg class="ic" width="11" height="11" viewBox="0 0 20 20" fill="none" stroke="currentColor" stroke-width="1.6" stroke-linecap="round" stroke-linejoin="round"><path d="M2.2 11.2A7.9 7.9 0 1 1 9.2 17.9"/><path d="M0.4 9.3L2.2 11.6L4.6 9.8" /><circle cx="10" cy="10" r="1.5" fill="currentColor" stroke="none"/></svg></i><b style="left:19.6px">287&#176;</b><i style="left:44.4px"><svg class="ic" width="11" height="11" viewBox="0 0 20 20" fill="none" stroke="currentColor" stroke-width="1.6" stroke-linecap="round"><circle cx="10" cy="10" r="8"/><path d="M10 10H18"/><circle cx="10" cy="10" r="1.6" fill="currentColor" stroke="none"/></svg></i><b style="left:57.6px">50%</b><i style="left:83.5px"><svg class="ic" width="11" height="11" viewBox="0 0 20 20" fill="none" stroke="currentColor" stroke-width="1.6" stroke-linejoin="round"><path d="M1.5 14V1.5H14"/><path d="M3.7 16.2V3.7H16.2"/><rect x="6" y="6" width="12.5" height="12.5" rx="0.8"/></svg></i><b style="left:96.4px">0.7</b></div></div>
  <div class="sw" style="left:1147px"><div class="swc" style="background:#e1d3de"></div>
<div class="swl"><i style="left:6.2px"><svg class="ic" width="11" height="11" viewBox="0 0 20 20" fill="none" stroke="currentColor" stroke-width="1.6" stroke-linecap="round" stroke-linejoin="round"><path d="M2.2 11.2A7.9 7.9 0 1 1 9.2 17.9"/><path d="M0.4 9.3L2.2 11.6L4.6 9.8" /><circle cx="10" cy="10" r="1.5" fill="currentColor" stroke="none"/></svg></i><b style="left:19.6px">310&#176;</b><i style="left:43.6px"><svg class="ic" width="11" height="11" viewBox="0 0 20 20" fill="none" stroke="currentColor" stroke-width="1.6" stroke-linecap="round"><circle cx="10" cy="10" r="8"/><path d="M10 10H18"/><circle cx="10" cy="10" r="1.6" fill="currentColor" stroke="none"/></svg></i><b style="left:56.9px">6%</b><i style="left:77.2px"><svg class="ic" width="11" height="11" viewBox="0 0 20 20" fill="none" stroke="currentColor" stroke-width="1.6" stroke-linejoin="round"><path d="M1.5 14V1.5H14"/><path d="M3.7 16.2V3.7H16.2"/><rect x="6" y="6" width="12.5" height="12.5" rx="0.8"/></svg></i><b style="left:90.9px">0.88</b></div></div>
</div>

<div class="hdr">
  <div class="row1"></div>
  <div class="row2"></div>
  <div class="ln" style="left:0;top:56px;width:1391px;height:1px"></div>
  <div class="ln" style="left:0;top:59px;width:1391px;height:1px;opacity:.75"></div>
  <div class="ln" style="left:0;top:99px;width:1391px;height:1px"></div>
  <div class="ln" style="left:1331px;top:0;width:1px;height:56px"></div>
  <div class="ln" style="left:199px;top:59px;width:1px;height:40px"></div>
  <div class="ln" style="left:239px;top:59px;width:1px;height:40px"></div>
  <div class="ln" style="left:279px;top:59px;width:1px;height:40px"></div>
  <div class="ln" style="left:560px;top:59px;width:1px;height:40px"></div>
  <div class="logo">CHROMOBASE</div>
  <div class="cw">COLOUR WHEEL</div>
  <svg class="hsvg" width="1391" height="100" viewBox="0 0 1391 100" fill="none" stroke="#2e1a38" stroke-width="1.5" stroke-linecap="round"><circle cx="218.1" cy="80.2" r="8.4"/><path d="M224.3 86.4L230.6 92.7M214.1 80.2H222.1M218.1 76.2V84.2"/><circle cx="258.3" cy="80.2" r="8.4"/><path d="M264.5 86.4L270.8 92.7M254.3 80.2H262.3"/><g stroke-width="1.3"><circle cx="305.9" cy="79.8" r="7.6"/><path d="M302.6 79.8H309.2"/><circle cx="534" cy="79.8" r="7.6"/><path d="M530.7 79.8H537.3M534 76.5V83.1"/></g><circle cx="328.9" cy="79.8" r="9.5" fill="#2c2c2c" stroke="#2a1830" stroke-width="1.1"/><circle cx="351.9" cy="79.8" r="9.5" fill="#474747" stroke="#2a1830" stroke-width="1.1"/><circle cx="374.0" cy="79.8" r="9.5" fill="#636363" stroke="#2a1830" stroke-width="1.1"/><circle cx="397.0" cy="79.8" r="9.5" fill="#7e7e7e" stroke="#2a1830" stroke-width="1.1"/><circle cx="419.8" cy="79.8" r="9.3" fill="#909090" stroke="#8a2be2" stroke-width="2.2"/><circle cx="443.0" cy="79.8" r="9.5" fill="#acacac" stroke="#2a1830" stroke-width="1.1"/><circle cx="465.9" cy="79.8" r="9.5" fill="#c4c4c4" stroke="#2a1830" stroke-width="1.1"/><circle cx="488.1" cy="79.8" r="9.5" fill="#dcdcdc" stroke="#2a1830" stroke-width="1.1"/><circle cx="511.0" cy="79.8" r="9.5" fill="#f3f3f3" stroke="#2a1830" stroke-width="1.1"/><g stroke="#190c1f" stroke-width="2" stroke-linecap="butt"><path d="M1350 20H1373M1350 28H1373M1350 36H1373"/></g></svg>
  <div class="hsv" style="left:578px"><svg class="ic" width="20" height="20" viewBox="0 0 20 20" fill="none" stroke="currentColor" stroke-width="1.6" stroke-linecap="round" stroke-linejoin="round"><path d="M2.2 11.2A7.9 7.9 0 1 1 9.2 17.9"/><path d="M0.4 9.3L2.2 11.6L4.6 9.8" /><circle cx="10" cy="10" r="1.5" fill="currentColor" stroke="none"/></svg><span style="left:26px">Hue</span></div>
  <div class="hsv" style="left:645px"><svg class="ic" width="20" height="20" viewBox="0 0 20 20" fill="none" stroke="currentColor" stroke-width="1.6" stroke-linecap="round"><circle cx="10" cy="10" r="8"/><path d="M10 10H18"/><circle cx="10" cy="10" r="1.6" fill="currentColor" stroke="none"/></svg><span style="left:27px;letter-spacing:.5px">Saturation</span></div>
  <div class="hsv" style="left:759px"><svg class="ic" width="20" height="20" viewBox="0 0 20 20" fill="none" stroke="currentColor" stroke-width="1.6" stroke-linejoin="round"><path d="M1.5 14V1.5H14"/><path d="M3.7 16.2V3.7H16.2"/><rect x="6" y="6" width="12.5" height="12.5" rx="0.8"/></svg><span style="left:27px">Value</span></div>
</div>
</body></html>
